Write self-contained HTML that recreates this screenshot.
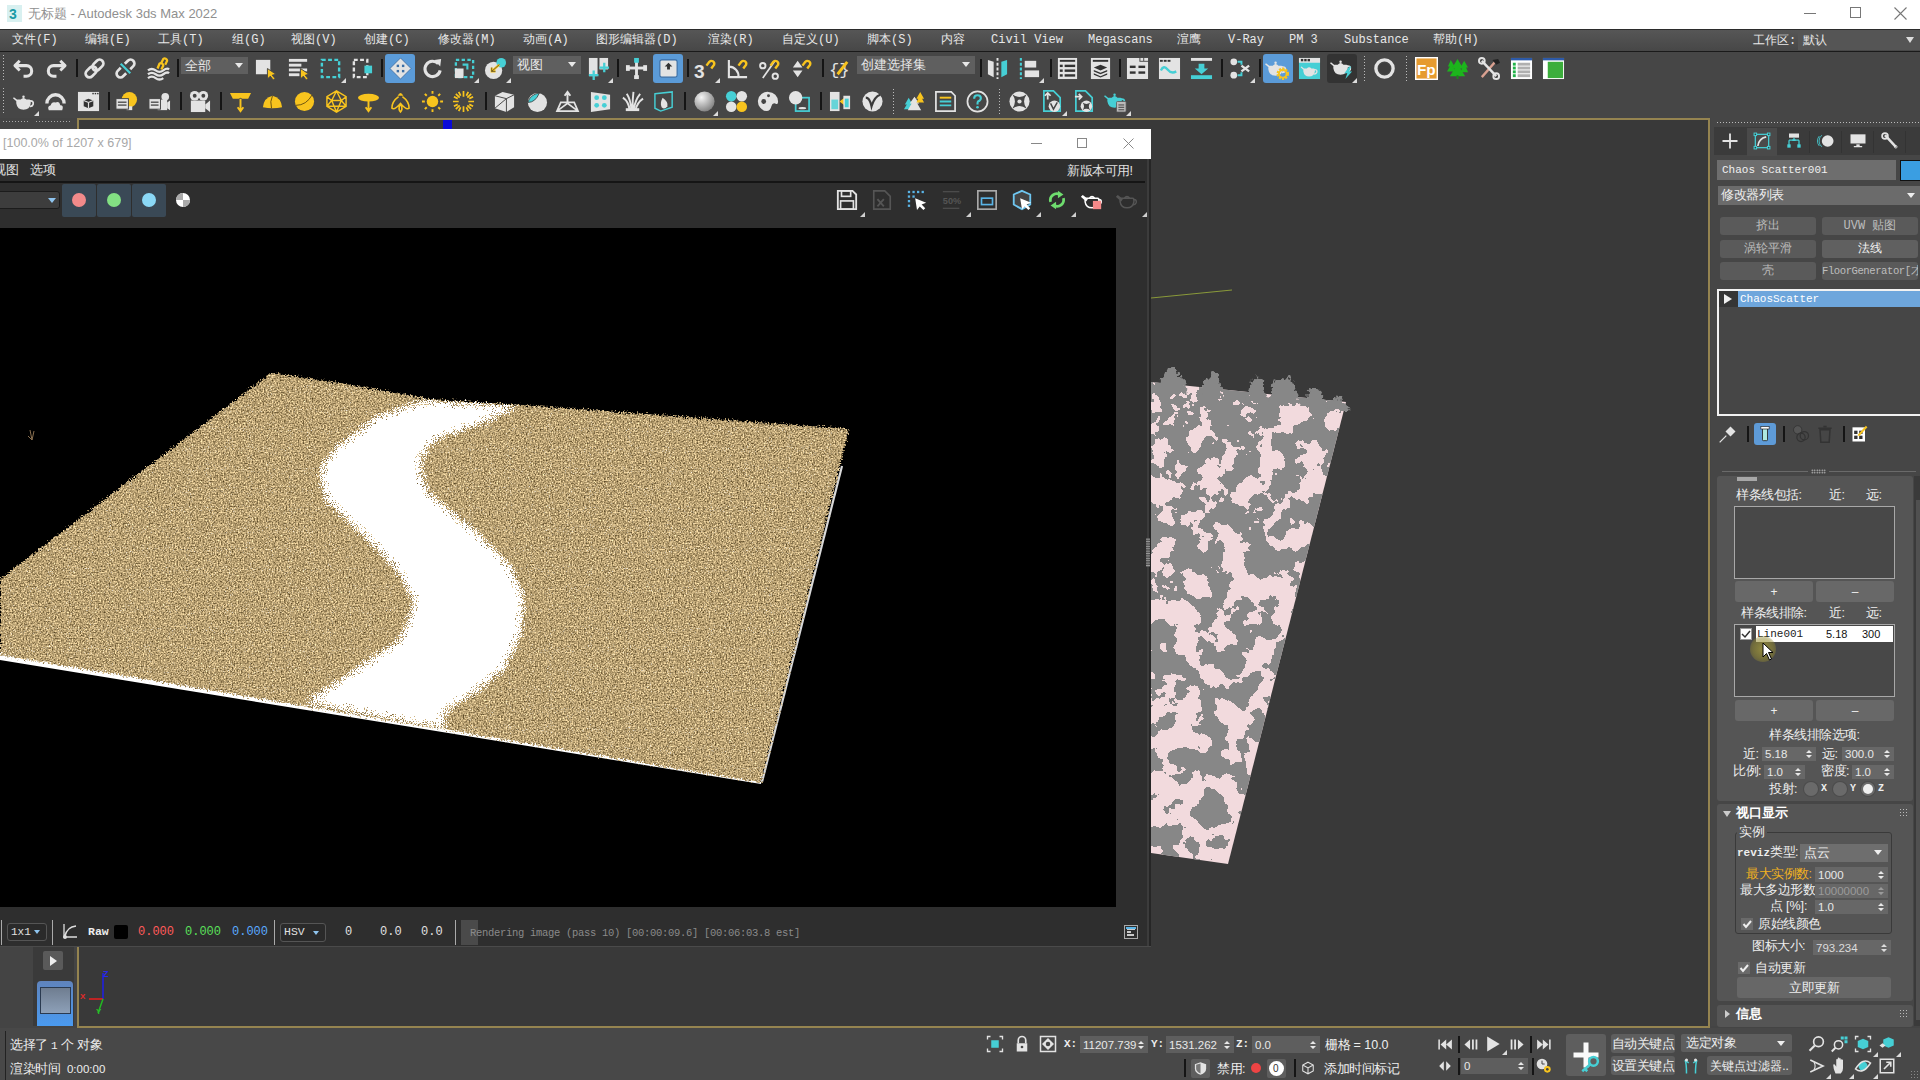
<!DOCTYPE html>
<html><head><meta charset="utf-8">
<style>
*{box-sizing:border-box;margin:0;padding:0}
html,body{width:1920px;height:1080px;overflow:hidden;background:#444444;font-family:"Liberation Sans",sans-serif;color:#e6e6e6}
.a{position:absolute}
.t{position:absolute;white-space:nowrap;font-size:12px;line-height:14px}
.m{font-family:"Liberation Mono",monospace}
.mn{top:31px;font-size:12px;line-height:18px;color:#e8e8e8;font-family:"Liberation Mono",monospace}
.ic{position:absolute;width:24px;height:24px;overflow:visible}
.sep{position:absolute;width:2px;height:18px;background:#151515}
.dd{position:absolute;background:#5e5e5e;height:17px}
.cor{position:absolute;width:0;height:0;border-left:5px solid transparent;border-bottom:5px solid #e0e0e0}
.c{display:inline-block;width:1em;font-style:normal;text-align:center;text-indent:0}
</style></head><body>
<!-- title bar -->
<div class="a" style="left:0;top:0;width:1920px;height:29px;background:#ffffff"></div>
<div class="a" style="left:0;top:29px;width:1920px;height:1px;background:#2b2b2b"></div>
<div class="a" style="left:0;top:30px;width:1920px;height:21px;background:linear-gradient(#565656,#474747)"></div>
<div class="a" style="left:0;top:51px;width:1920px;height:1px;background:#1a1a1a"></div>
<div class="a" style="left:0;top:52px;width:1920px;height:66px;background:#464646"></div>
<!-- viewport -->
<div class="a" style="left:77px;top:118px;width:1633px;height:910px;background:#393939;border:2px solid #958450"></div>
<!-- bottom status -->
<div class="a" style="left:0;top:1028px;width:1920px;height:52px;background:#484848"></div>
<div class="a" style="left:443px;top:120px;width:9px;height:9px;background:#0a0ad8"></div>
<!-- title -->
<svg class="ic" style="left:6px;top:4px;width:18px;height:20px" viewBox="0 0 18 20"><rect x="1" y="1" width="15" height="17" fill="#d8f0f0"/><text x="3" y="15" font-family="Liberation Sans" font-weight="bold" font-size="14" fill="#1a9aa6">3</text></svg>
<div class="t" style="left:28px;top:6px;font-size:13px;line-height:16px;color:#8f8f8f"><i class="c">无</i><i class="c">标</i><i class="c">题</i> - Autodesk 3ds Max 2022</div>
<div class="a" style="left:1804px;top:13px;width:12px;height:1px;background:#777"></div>
<div class="a" style="left:1850px;top:7px;width:11px;height:11px;border:1px solid #777"></div>
<svg class="ic" style="left:1894px;top:7px;width:13px;height:13px" viewBox="0 0 13 13"><path d="M0.5 0.5L12.5 12.5M12.5 0.5L0.5 12.5" stroke="#777" stroke-width="1.1"/></svg>
<div class="t mn" style="left:12px"><i class="c">文</i><i class="c">件</i>(F)</div>
<div class="t mn" style="left:85px"><i class="c">编</i><i class="c">辑</i>(E)</div>
<div class="t mn" style="left:158px"><i class="c">工</i><i class="c">具</i>(T)</div>
<div class="t mn" style="left:232px"><i class="c">组</i>(G)</div>
<div class="t mn" style="left:291px"><i class="c">视</i><i class="c">图</i>(V)</div>
<div class="t mn" style="left:364px"><i class="c">创</i><i class="c">建</i>(C)</div>
<div class="t mn" style="left:438px"><i class="c">修</i><i class="c">改</i><i class="c">器</i>(M)</div>
<div class="t mn" style="left:523px"><i class="c">动</i><i class="c">画</i>(A)</div>
<div class="t mn" style="left:596px"><i class="c">图</i><i class="c">形</i><i class="c">编</i><i class="c">辑</i><i class="c">器</i>(D)</div>
<div class="t mn" style="left:708px"><i class="c">渲</i><i class="c">染</i>(R)</div>
<div class="t mn" style="left:782px"><i class="c">自</i><i class="c">定</i><i class="c">义</i>(U)</div>
<div class="t mn" style="left:867px"><i class="c">脚</i><i class="c">本</i>(S)</div>
<div class="t mn" style="left:941px"><i class="c">内</i><i class="c">容</i></div>
<div class="t mn" style="left:991px">Civil View</div>
<div class="t mn" style="left:1088px">Megascans</div>
<div class="t mn" style="left:1177px"><i class="c">渲</i><i class="c">鹰</i></div>
<div class="t mn" style="left:1228px">V-Ray</div>
<div class="t mn" style="left:1289px">PM 3</div>
<div class="t mn" style="left:1344px">Substance</div>
<div class="t mn" style="left:1433px"><i class="c">帮</i><i class="c">助</i>(H)</div>
<div class="t mn" style="left:1753px;top:32px"><i class="c">工</i><i class="c">作</i><i class="c">区</i>:</div>
<div class="a" style="left:1798px;top:30px;width:122px;height:20px;background:#555555"></div>
<div class="t mn" style="left:1803px;top:32px"><i class="c">默</i><i class="c">认</i></div>
<div class="a" style="left:1906px;top:37px;width:0;height:0;border-left:4px solid transparent;border-right:4px solid transparent;border-top:6px solid #ddd"></div>
<!-- toolbar -->
<div class="a" style="left:2px;top:54.0px;width:3px;height:28px;background-image:radial-gradient(#bbb 0.8px,transparent 1px);background-size:3px 3px"></div>
<div class="a" style="left:2px;top:87.0px;width:3px;height:28px;background-image:radial-gradient(#bbb 0.8px,transparent 1px);background-size:3px 3px"></div>
<div class="a" style="left:385px;top:54px;width:30px;height:29px;background:#5b9bd8;border-radius:3px"></div>
<div class="a" style="left:653px;top:54px;width:30px;height:29px;background:#5b9bd8;border-radius:3px"></div>
<div class="a" style="left:1263px;top:54px;width:30px;height:29px;background:#5b9bd8;border-radius:3px"></div>
<div class="a" style="left:1327px;top:54px;width:30px;height:29px;background:#333333;border-radius:3px"></div>
<svg class="ic" style="left:12.5px;top:56.5px;width:23px;height:23px" viewBox="0 0 24 24"><path d="M7 4L2 9L7 14" fill="none" stroke="#e3e3e3" stroke-width="3" stroke-linejoin="round"/><path d="M3 9H14A5.5 5.5 0 0 1 14 20H11" fill="none" stroke="#e3e3e3" stroke-width="3.2"/></svg>
<svg class="ic" style="left:43.5px;top:56.5px;width:23px;height:23px" viewBox="0 0 24 24"><path d="M17 4L22 9L17 14" fill="none" stroke="#e3e3e3" stroke-width="3" stroke-linejoin="round"/><path d="M21 9H10A5.5 5.5 0 0 0 10 20H13" fill="none" stroke="#e3e3e3" stroke-width="3.2"/></svg>
<svg class="ic" style="left:82.5px;top:56.5px;width:23px;height:23px" viewBox="0 0 24 24"><g transform="rotate(-45 12 12)" fill="none" stroke="#e3e3e3" stroke-width="2.8"><rect x="0.5" y="8" width="13" height="8" rx="4"/><rect x="10.5" y="8" width="13" height="8" rx="4"/></g></svg>
<svg class="ic" style="left:113.5px;top:56.5px;width:23px;height:23px" viewBox="0 0 24 24"><g transform="rotate(-45 12 12)" fill="none" stroke="#e3e3e3" stroke-width="2.8"><path d="M9 8H4.5A4 4 0 0 0 4.5 16H9"/><path d="M15 8H19.5A4 4 0 0 1 19.5 16H15"/></g><path d="M7 7L17 17" stroke="#46cfd5" stroke-width="2.2"/></svg>
<svg class="ic" style="left:146.5px;top:56.5px;width:23px;height:23px" viewBox="0 0 24 24"><g fill="none" stroke="#e3e3e3" stroke-width="2.4"><path d="M1 14Q5 11 9 14T17 14T23 13"/><path d="M1 18Q5 15 9 18T17 18T23 17"/><path d="M1 22Q5 19 9 22T17 22"/></g><g fill="none" stroke="#f8c41e" stroke-width="2.4"><path d="M11 12L13 7A2.5 2.5 0 0 1 17 9L15 13"/><path d="M15 6L17 2A2.5 2.5 0 0 1 21 4L19 8"/></g></svg>
<svg class="ic" style="left:253.5px;top:56.5px;width:23px;height:23px" viewBox="0 0 24 24"><rect x="2" y="3" width="15" height="15" fill="#e3e3e3"/><path d="M14 12L14 23L17 20L20 24L22 22.5L19 19L23 18Z" fill="#f8c41e" stroke="#464646" stroke-width="1"/></svg>
<svg class="ic" style="left:286.5px;top:56.5px;width:23px;height:23px" viewBox="0 0 24 24"><g fill="#e3e3e3"><rect x="2" y="2" width="19" height="3"/><rect x="2" y="7" width="13" height="3"/><rect x="2" y="12" width="19" height="3"/><rect x="2" y="17" width="11" height="3"/></g><path d="M14 12L14 23L17 20L20 24L22 22.5L19 19L23 18Z" fill="#f8c41e" stroke="#464646" stroke-width="1"/></svg>
<svg class="ic" style="left:318.5px;top:56.5px;width:23px;height:23px" viewBox="0 0 24 24"><rect x="3" y="3" width="18" height="18" fill="none" stroke="#46cfd5" stroke-width="2.5" stroke-dasharray="4 2.5"/></svg>
<svg class="ic" style="left:350.5px;top:56.5px;width:23px;height:23px" viewBox="0 0 24 24"><rect x="3" y="3" width="14" height="18" fill="none" stroke="#e3e3e3" stroke-width="2.5" stroke-dasharray="4 2.5"/><rect x="14" y="9" width="8" height="8" fill="#46cfd5"/></svg>
<svg class="ic" style="left:388.5px;top:56.5px;width:23px;height:23px" viewBox="0 0 24 24"><path d="M12 1L23 12L12 23L1 12Z" fill="#e3e3e3" stroke="#3d6a9e" stroke-width="0.8"/><g fill="#3b6ea5"><rect x="8" y="8" width="2.5" height="2.5"/><rect x="13.5" y="8" width="2.5" height="2.5"/><rect x="8" y="13.5" width="2.5" height="2.5"/><rect x="13.5" y="13.5" width="2.5" height="2.5"/></g></svg>
<svg class="ic" style="left:420.5px;top:56.5px;width:23px;height:23px" viewBox="0 0 24 24"><path d="M18 7A8 8 0 1 0 20 14" fill="none" stroke="#e3e3e3" stroke-width="3.2"/><path d="M14 3L21 2L20 10Z" fill="#e3e3e3"/></svg>
<svg class="ic" style="left:452.5px;top:56.5px;width:23px;height:23px" viewBox="0 0 24 24"><rect x="3" y="3" width="18" height="18" fill="none" stroke="#46cfd5" stroke-width="2.4" stroke-dasharray="3.5 2.5"/><rect x="2" y="12" width="9" height="10" fill="#e3e3e3"/><path d="M10 8H15V13" fill="none" stroke="#46cfd5" stroke-width="2.2"/></svg>
<svg class="ic" style="left:483.5px;top:56.5px;width:23px;height:23px" viewBox="0 0 24 24"><circle cx="10" cy="14" r="9" fill="#e3e3e3"/><circle cx="18" cy="6" r="5" fill="#46cfd5"/><path d="M16 8L8 15M8 11V15H12" fill="none" stroke="#f8c41e" stroke-width="2.2"/><path d="M16 8L8 15M8 11V15H12" fill="none" stroke="#222" stroke-width="0.6"/></svg>
<svg class="ic" style="left:586.5px;top:56.5px;width:23px;height:23px" viewBox="0 0 24 24"><rect x="2" y="1" width="9" height="19" fill="#e3e3e3"/><rect x="13" y="1" width="9" height="12" fill="#e3e3e3"/><g stroke="#46cfd5" stroke-width="2.4"><path d="M7 14V24M2 19H12"/><path d="M18 6V16M13 11H23"/></g></svg>
<svg class="ic" style="left:624.5px;top:56.5px;width:23px;height:23px" viewBox="0 0 24 24"><g fill="#e3e3e3"><rect x="10.5" y="5" width="3" height="18"/><rect x="2" y="10" width="20" height="3"/><rect x="1" y="8.5" width="4" height="6"/><rect x="19" y="8.5" width="4" height="6"/><rect x="9.5" y="19" width="5" height="4"/></g><rect x="9.5" y="1" width="5" height="5" fill="#46cfd5"/></svg>
<svg class="ic" style="left:656.5px;top:56.5px;width:23px;height:23px" viewBox="0 0 24 24"><rect x="3" y="3" width="18" height="18" rx="2" fill="#e3e3e3" stroke="#3b6ea5" stroke-width="1.2"/><path d="M12 6L16 10H13.5V13H10.5V10H8Z" fill="#333"/></svg>
<svg class="ic" style="left:693.5px;top:56.5px;width:23px;height:23px" viewBox="0 0 24 24"><text x="0" y="22" font-family="Liberation Sans" font-weight="bold" font-size="20" fill="#e3e3e3">3</text><path d="M13 9L16 5A3 3 0 0 1 21 8L18 12" fill="none" stroke="#f8c41e" stroke-width="2.5"/></svg>
<svg class="ic" style="left:725.5px;top:56.5px;width:23px;height:23px" viewBox="0 0 24 24"><path d="M3 3V21H22M3 10A10 10 0 0 1 13 21" fill="none" stroke="#e3e3e3" stroke-width="2.2"/><path d="M13 9L16 5A3 3 0 0 1 21 8L18 12" fill="none" stroke="#f8c41e" stroke-width="2.5"/></svg>
<svg class="ic" style="left:757.5px;top:56.5px;width:23px;height:23px" viewBox="0 0 24 24"><circle cx="5" cy="9" r="2.8" fill="none" stroke="#e3e3e3" stroke-width="2"/><circle cx="18" cy="20" r="2.8" fill="none" stroke="#e3e3e3" stroke-width="2"/><path d="M5 22L17 5" stroke="#e3e3e3" stroke-width="1.8"/><path d="M13 9L16 5A3 3 0 0 1 21 8L18 12" fill="none" stroke="#f8c41e" stroke-width="2.5"/></svg>
<svg class="ic" style="left:789.5px;top:56.5px;width:23px;height:23px" viewBox="0 0 24 24"><path d="M3 11L8 4L13 11Z M3 14L8 21L13 14Z" fill="#e3e3e3"/><path d="M13 9L16 5A3 3 0 0 1 21 8L18 12" fill="none" stroke="#f8c41e" stroke-width="2.5"/></svg>
<svg class="ic" style="left:828.5px;top:56.5px;width:23px;height:23px" viewBox="0 0 24 24"><text x="0" y="19" font-family="Liberation Mono" font-size="18" fill="#e3e3e3">{}</text><path d="M9 18L19 5" stroke="#f8c41e" stroke-width="3"/></svg>
<svg class="ic" style="left:985.5px;top:56.5px;width:23px;height:23px" viewBox="0 0 24 24"><path d="M2 3L8 5V21L2 18Z" fill="#e3e3e3"/><path d="M22 3L16 5V21L22 18Z" fill="#46cfd5"/><path d="M12 1V23" stroke="#e3e3e3" stroke-width="2" stroke-dasharray="3 2"/></svg>
<svg class="ic" style="left:1017.5px;top:56.5px;width:23px;height:23px" viewBox="0 0 24 24"><path d="M3 1V23" stroke="#46cfd5" stroke-width="2.2" stroke-dasharray="3 2"/><rect x="7" y="4" width="12" height="7" fill="#e3e3e3"/><rect x="7" y="14" width="15" height="7" fill="#e3e3e3"/></svg>
<svg class="ic" style="left:1055.5px;top:56.5px;width:23px;height:23px" viewBox="0 0 24 24"><rect x="2" y="1" width="20" height="22" fill="#e3e3e3"/><g fill="#333"><rect x="4" y="3" width="16" height="2"/><rect x="4" y="8" width="3" height="2.5"/><rect x="9" y="8" width="11" height="2.5"/><rect x="4" y="13" width="3" height="2.5"/><rect x="9" y="13" width="11" height="2.5"/><rect x="4" y="18" width="3" height="2.5"/><rect x="9" y="18" width="11" height="2.5"/></g></svg>
<svg class="ic" style="left:1088.5px;top:56.5px;width:23px;height:23px" viewBox="0 0 24 24"><rect x="2" y="1" width="20" height="22" fill="#e3e3e3"/><rect x="4" y="3" width="16" height="2" fill="#333"/><path d="M12 8L19 11L12 14L5 11Z M5 13.5L12 16.5L19 13.5V15L12 18L5 15Z M5 17L12 20L19 17V18.5L12 21.5L5 18.5Z" fill="#333"/></svg>
<svg class="ic" style="left:1125.5px;top:56.5px;width:23px;height:23px" viewBox="0 0 24 24"><path d="M1 1H14V5H23V23H1Z" fill="#e3e3e3"/><rect x="15" y="1" width="3" height="3" fill="#e3e3e3"/><rect x="19" y="1" width="4" height="3" fill="#e3e3e3"/><g fill="#333"><rect x="4" y="9" width="6" height="2.5"/><rect x="13" y="9" width="7" height="2.5"/><rect x="4" y="15" width="6" height="2.5"/><rect x="13" y="15" width="7" height="2.5"/></g></svg>
<svg class="ic" style="left:1157.5px;top:56.5px;width:23px;height:23px" viewBox="0 0 24 24"><rect x="1" y="1" width="22" height="22" fill="#e3e3e3"/><g fill="#333"><rect x="2" y="3" width="3" height="2"/><rect x="6" y="3" width="3" height="2"/><rect x="10" y="3" width="3" height="2"/></g><path d="M3 14Q6 8 10 13T19 15" fill="none" stroke="#46cfd5" stroke-width="2.5"/></svg>
<svg class="ic" style="left:1189.5px;top:56.5px;width:23px;height:23px" viewBox="0 0 24 24"><rect x="1" y="1" width="22" height="3" fill="#e3e3e3"/><rect x="1" y="19" width="22" height="4" fill="#46cfd5"/><path d="M9 7H15V12H19L12 18L5 12H9Z" fill="#46cfd5"/></svg>
<svg class="ic" style="left:1228.5px;top:56.5px;width:23px;height:23px" viewBox="0 0 24 24"><g fill="#e3e3e3"><circle cx="5" cy="5" r="3.5"/><circle cx="5" cy="19" r="3.5"/></g><g stroke="#46cfd5" stroke-width="2" fill="none"><path d="M9 5H13V8M9 19H13V16"/></g><path d="M13 9L21 15M13 15L21 9" stroke="#e3e3e3" stroke-width="2.5"/></svg>
<svg class="ic" style="left:1265.5px;top:56.5px;width:23px;height:23px" viewBox="0 0 24 24"><g transform="translate(-2 -1)"><path d="M6 10H18Q20 10 19.5 14Q18.5 20.5 12 20.5Q5.5 20.5 4.5 14Q4 10 6 10Z M5.5 12.5L1 8.5L2 7.5L6.5 11Z M9 10Q12 6.5 15 10Z" fill="#e3e3e3"/><circle cx="12" cy="7" r="1.3" fill="#e3e3e3"/><path d="M18.5 11.5Q23 11 22 15Q21 17.5 18.5 17" fill="none" stroke="#e3e3e3" stroke-width="1.8"/></g><circle cx="17.5" cy="17.5" r="5" fill="none" stroke="#f8c41e" stroke-width="3" stroke-dasharray="2 1.2"/><circle cx="17.5" cy="17.5" r="4" fill="none" stroke="#f8c41e" stroke-width="2"/></svg>
<svg class="ic" style="left:1297.5px;top:56.5px;width:23px;height:23px" viewBox="0 0 24 24"><rect x="1" y="1" width="22" height="22" fill="#46cfd5"/><rect x="1" y="1" width="22" height="5" fill="#e3e3e3"/><g fill="#333"><rect x="3" y="2" width="2.5" height="2.5"/><rect x="6.5" y="2" width="2.5" height="2.5"/><rect x="10" y="2" width="2.5" height="2.5"/></g><g transform="translate(2 4) scale(0.8)"><path d="M6 10H18Q20 10 19.5 14Q18.5 20.5 12 20.5Q5.5 20.5 4.5 14Q4 10 6 10Z M5.5 12.5L1 8.5L2 7.5L6.5 11Z M9 10Q12 6.5 15 10Z" fill="#e3e3e3"/><path d="M18.5 11.5Q23 11 22 15Q21 17.5 18.5 17" fill="none" stroke="#e3e3e3" stroke-width="1.8"/></g></svg>
<svg class="ic" style="left:1330.5px;top:56.5px;width:23px;height:23px" viewBox="0 0 24 24"><g transform="translate(-2 -2)"><path d="M6 10H18Q20 10 19.5 14Q18.5 20.5 12 20.5Q5.5 20.5 4.5 14Q4 10 6 10Z M5.5 12.5L1 8.5L2 7.5L6.5 11Z M9 10Q12 6.5 15 10Z" fill="#e3e3e3"/><circle cx="12" cy="7" r="1.3" fill="#e3e3e3"/><path d="M18.5 11.5Q23 11 22 15Q21 17.5 18.5 17" fill="none" stroke="#e3e3e3" stroke-width="1.8"/></g><path d="M19 10L14 17H17L15 23L22 15H19L21 10Z" fill="#46cfd5"/></svg>
<svg class="ic" style="left:1372.5px;top:56.5px;width:23px;height:23px" viewBox="0 0 24 24"><circle cx="12" cy="12" r="9" fill="none" stroke="#e3e3e3" stroke-width="3.5"/><circle cx="12" cy="12" r="6" fill="#3e3e3e"/></svg>
<svg class="ic" style="left:1414.5px;top:56.5px;width:23px;height:23px" viewBox="0 0 24 24"><rect x="0" y="0" width="24" height="24" fill="#fff"/><rect x="1.5" y="1.5" width="21" height="21" fill="#e69b2f"/><text x="2" y="19" font-family="Liberation Sans" font-weight="bold" font-size="16" fill="#fff">Fp</text></svg>
<svg class="ic" style="left:1445.5px;top:56.5px;width:23px;height:23px" viewBox="0 0 24 24"><path d="M12 2L18 12H15L20 20H4L9 12H6Z" fill="#1cb51c"/><path d="M5 3L9 10H7L10 15H1L4 10H2Z" fill="#1cb51c"/><path d="M19 4L23 11H21L23 16H15L17 11H15Z" fill="#1cb51c"/><rect x="11" y="19" width="2" height="4" fill="#1a8a1a"/></svg>
<svg class="ic" style="left:1477.5px;top:56.5px;width:23px;height:23px" viewBox="0 0 24 24"><path d="M4 21L18 5" stroke="#d9a090" stroke-width="2.5"/><path d="M15 3L21 2L23 6L19 8Z" fill="#222"/><path d="M4 4L19 20" stroke="#e3e3e3" stroke-width="2.5"/><circle cx="4" cy="4" r="3" fill="none" stroke="#e3e3e3" stroke-width="2"/><circle cx="19" cy="20" r="3" fill="none" stroke="#e3e3e3" stroke-width="2"/></svg>
<svg class="ic" style="left:1509.5px;top:56.5px;width:23px;height:23px" viewBox="0 0 24 24"><rect x="1" y="1" width="22" height="22" fill="#fff"/><rect x="1" y="1" width="22" height="2.5" fill="#2d5aa8"/><g fill="#22b34a"><rect x="3" y="6" width="3" height="3"/><rect x="3" y="10" width="3" height="3"/><rect x="3" y="14" width="3" height="3"/><rect x="3" y="18" width="3" height="3"/></g><g fill="#b0b0b0"><rect x="8" y="6" width="13" height="3"/><rect x="8" y="10" width="13" height="3"/><rect x="8" y="14" width="13" height="3"/><rect x="8" y="18" width="13" height="3"/></g></svg>
<svg class="ic" style="left:1541.5px;top:56.5px;width:23px;height:23px" viewBox="0 0 24 24"><rect x="1" y="1" width="22" height="22" fill="#fff"/><rect x="1" y="1" width="22" height="2.5" fill="#2d5aa8"/><rect x="6" y="5" width="16" height="17" fill="#3cae3c"/></svg>
<div class="sep" style="left:76px;top:59.0px;height:18px;width:2px;background:#151515"></div>
<div class="sep" style="left:177px;top:59.0px;height:18px;width:2px;background:#151515"></div>
<div class="sep" style="left:381px;top:59.0px;height:18px;width:2px;background:#151515"></div>
<div class="sep" style="left:617px;top:59.0px;height:18px;width:2px;background:#151515"></div>
<div class="sep" style="left:687px;top:59.0px;height:18px;width:2px;background:#151515"></div>
<div class="sep" style="left:822px;top:59.0px;height:18px;width:2px;background:#151515"></div>
<div class="sep" style="left:980px;top:59.0px;height:18px;width:2px;background:#151515"></div>
<div class="sep" style="left:1050px;top:59.0px;height:18px;width:2px;background:#151515"></div>
<div class="sep" style="left:1119px;top:59.0px;height:18px;width:2px;background:#151515"></div>
<div class="sep" style="left:1221px;top:59.0px;height:18px;width:2px;background:#151515"></div>
<div class="sep" style="left:1259px;top:59.0px;height:18px;width:2px;background:#151515"></div>
<div class="a" style="left:1363px;top:55.0px;width:3px;height:26px;background-image:radial-gradient(#bbb 0.8px,transparent 1px);background-size:3px 3px"></div>
<div class="a" style="left:1405px;top:55.0px;width:3px;height:26px;background-image:radial-gradient(#bbb 0.8px,transparent 1px);background-size:3px 3px"></div>
<div class="cor" style="left:341px;top:78px;border-bottom-color:#dcdcdc"></div>
<div class="cor" style="left:474px;top:78px;border-bottom-color:#dcdcdc"></div>
<div class="cor" style="left:506px;top:78px;border-bottom-color:#dcdcdc"></div>
<div class="cor" style="left:608px;top:78px;border-bottom-color:#dcdcdc"></div>
<div class="cor" style="left:715px;top:78px;border-bottom-color:#dcdcdc"></div>
<div class="cor" style="left:1039px;top:78px;border-bottom-color:#dcdcdc"></div>
<div class="cor" style="left:1250px;top:78px;border-bottom-color:#dcdcdc"></div>
<div class="cor" style="left:1352px;top:78px;border-bottom-color:#dcdcdc"></div>
<div class="dd" style="left:181px;top:57px;width:67px;height:17px;background:#5f5f5f"></div>
<div class="t" style="left:185px;top:58px;font-size:13px;line-height:16px;color:#e8e8e8"><i class="c">全</i><i class="c">部</i></div>
<div class="a" style="left:235px;top:63px;width:0;height:0;border-left:4px solid transparent;border-right:4px solid transparent;border-top:5px solid #e8e8e8"></div>
<div class="dd" style="left:513px;top:56px;width:68px;height:18px;background:#5f5f5f"></div>
<div class="t" style="left:517px;top:57px;font-size:13px;line-height:16px;color:#e8e8e8"><i class="c">视</i><i class="c">图</i></div>
<div class="a" style="left:568px;top:62px;width:0;height:0;border-left:4px solid transparent;border-right:4px solid transparent;border-top:5px solid #e8e8e8"></div>
<div class="dd" style="left:857px;top:56px;width:118px;height:18px;background:#5f5f5f"></div>
<div class="t" style="left:861px;top:57px;font-size:13px;line-height:16px;color:#e8e8e8"><i class="c">创</i><i class="c">建</i><i class="c">选</i><i class="c">择</i><i class="c">集</i></div>
<div class="a" style="left:962px;top:62px;width:0;height:0;border-left:4px solid transparent;border-right:4px solid transparent;border-top:5px solid #e8e8e8"></div>
<svg class="ic" style="left:11.5px;top:89.5px;width:23px;height:23px" viewBox="0 0 24 24"><path d="M6 10H18Q20 10 19.5 14Q18.5 20.5 12 20.5Q5.5 20.5 4.5 14Q4 10 6 10Z M5.5 12.5L1 8.5L2 7.5L6.5 11Z M9 10Q12 6.5 15 10Z" fill="#e3e3e3"/><circle cx="12" cy="7" r="1.3" fill="#e3e3e3"/><path d="M18.5 11.5Q23 11 22 15Q21 17.5 18.5 17" fill="none" stroke="#e3e3e3" stroke-width="1.8"/></svg>
<svg class="ic" style="left:43.5px;top:89.5px;width:23px;height:23px" viewBox="0 0 24 24"><path d="M3 14A9 9 0 0 1 21 14" fill="none" stroke="#e3e3e3" stroke-width="3.5"/><path d="M5 21Q3 17 7 16Q8 12 12 13Q16 11 17 16Q21 16 19 21Z" fill="#e3e3e3"/></svg>
<svg class="ic" style="left:76.5px;top:89.5px;width:23px;height:23px" viewBox="0 0 24 24"><rect x="1" y="2" width="22" height="20" fill="#e3e3e3"/><g fill="#333"><rect x="16" y="3" width="1.5" height="1.5"/><rect x="18.5" y="3" width="1.5" height="1.5"/><rect x="21" y="3" width="1.5" height="1.5"/></g><rect x="3" y="6" width="18" height="14" fill="#e3e3e3"/><path d="M7 11L12 9L17 11V17L12 19L7 17Z" fill="#333"/><path d="M12 13V19M7 11L12 13L17 11" stroke="#e3e3e3" stroke-width="1.2" fill="none"/></svg>
<svg class="ic" style="left:114.5px;top:89.5px;width:23px;height:23px" viewBox="0 0 24 24"><circle cx="15" cy="10" r="8" fill="#f8c41e"/><rect x="12" y="17" width="6" height="4" fill="#e3e3e3"/><rect x="1" y="9" width="13" height="11" fill="#e3e3e3" stroke="#444" stroke-width="1"/><g fill="#555"><rect x="3" y="12" width="9" height="1.5"/><rect x="3" y="15" width="9" height="1.5"/></g></svg>
<svg class="ic" style="left:147.5px;top:89.5px;width:23px;height:23px" viewBox="0 0 24 24"><circle cx="18" cy="7" r="4" fill="#e3e3e3"/><rect x="10" y="10" width="10" height="11" fill="#e3e3e3"/><path d="M20 13L23 11V21L20 19Z" fill="#e3e3e3"/><rect x="1" y="9" width="12" height="11" fill="#e3e3e3" stroke="#444" stroke-width="1"/><g fill="#555"><rect x="3" y="12" width="8" height="1.5"/><rect x="3" y="15" width="8" height="1.5"/></g></svg>
<svg class="ic" style="left:187.5px;top:89.5px;width:23px;height:23px" viewBox="0 0 24 24"><circle cx="7" cy="6" r="5" fill="#e3e3e3"/><circle cx="16" cy="6" r="5" fill="#e3e3e3"/><circle cx="7" cy="6" r="2" fill="#444"/><circle cx="16" cy="6" r="2" fill="#444"/><rect x="3" y="11" width="15" height="12" fill="#e3e3e3"/><path d="M18 15L23 11V23L18 19Z" fill="#e3e3e3"/></svg>
<svg class="ic" style="left:228.5px;top:89.5px;width:23px;height:23px" viewBox="0 0 24 24"><path d="M1 3H23L20 9H14L12 8L10 9H4Z" fill="#f8c41e"/><path d="M12 9V21M9 18L12 22L15 18" stroke="#f8c41e" stroke-width="2" fill="none"/></svg>
<svg class="ic" style="left:260.5px;top:89.5px;width:23px;height:23px" viewBox="0 0 24 24"><path d="M2 18Q3 8 12 6Q21 8 22 18Q12 20 2 18Z" fill="#f8c41e"/><path d="M12 6Q9 12 11 19" stroke="#6a5210" stroke-width="1" fill="none"/></svg>
<svg class="ic" style="left:292.5px;top:89.5px;width:23px;height:23px" viewBox="0 0 24 24"><circle cx="12" cy="12" r="10" fill="#f8c41e"/><path d="M3 16Q14 16 20 5" stroke="#6a5210" stroke-width="1" fill="none"/></svg>
<svg class="ic" style="left:324.5px;top:89.5px;width:23px;height:23px" viewBox="0 0 24 24"><path d="M12 1L22 7V17L12 23L2 17V7Z M12 1L7 11L12 23M12 1L17 11L12 23M2 7L7 11H17L22 7M2 17L7 11M22 17L17 11M2 17H22" fill="none" stroke="#f8c41e" stroke-width="1.5"/></svg>
<svg class="ic" style="left:356.5px;top:89.5px;width:23px;height:23px" viewBox="0 0 24 24"><ellipse cx="12" cy="8" rx="11" ry="4" fill="#f8c41e"/><path d="M12 11V21M9 18L12 22L15 18" stroke="#f8c41e" stroke-width="2" fill="none"/></svg>
<svg class="ic" style="left:388.5px;top:89.5px;width:23px;height:23px" viewBox="0 0 24 24"><path d="M9 6Q12 0 15 6Z" fill="#f8c41e"/><path d="M10 7Q3 12 3 19Q6 21 12 14Q18 21 21 19Q21 12 14 7M12 14Q9 20 12 23Q15 20 12 14" fill="none" stroke="#f8c41e" stroke-width="1.6"/></svg>
<svg class="ic" style="left:420.5px;top:89.5px;width:23px;height:23px" viewBox="0 0 24 24"><circle cx="12" cy="12" r="6" fill="#f8c41e"/><g stroke="#f8c41e" stroke-width="2"><path d="M12 1V4M12 20V23M1 12H4M20 12H23M4 4L6 6M18 18L20 20M4 20L6 18M18 6L20 4"/></g></svg>
<svg class="ic" style="left:451.5px;top:89.5px;width:23px;height:23px" viewBox="0 0 24 24"><g stroke="#f8c41e" stroke-width="1.8"><path d="M12 1V7M12 17V23M1 12H7M17 12H23M4 4L8 8M16 16L20 20M4 20L8 16M16 8L20 4M7 2L9 6M17 2L15 6M2 7L6 9M22 7L18 9M2 17L6 15M22 17L18 15M7 22L9 18M17 22L15 18"/></g></svg>
<svg class="ic" style="left:492.5px;top:89.5px;width:23px;height:23px" viewBox="0 0 24 24"><path d="M2 6L10 2L22 5V18L14 23L2 19Z" fill="#e3e3e3"/><path d="M2 6L14 9L22 5M14 9V23M14 9L2 19" stroke="#444" stroke-width="1" fill="none"/></svg>
<svg class="ic" style="left:524.5px;top:89.5px;width:23px;height:23px" viewBox="0 0 24 24"><circle cx="13" cy="13" r="10" fill="#e3e3e3"/><path d="M3 13Q5 5 15 3Q11 13 3 13Z" fill="#46cfd5" stroke="#333" stroke-width="0.8"/></svg>
<svg class="ic" style="left:555.5px;top:89.5px;width:23px;height:23px" viewBox="0 0 24 24"><path d="M12 3V14M9 6L12 2L15 6" stroke="#e3e3e3" stroke-width="2" fill="none"/><path d="M5 13L19 13L23 22H1Z M1 22L12 14L23 22" fill="none" stroke="#e3e3e3" stroke-width="1.8"/></svg>
<svg class="ic" style="left:588.5px;top:89.5px;width:23px;height:23px" viewBox="0 0 24 24"><path d="M2 2L22 5V20L2 23Z" fill="#e3e3e3"/><g fill="#46cfd5"><circle cx="8" cy="8" r="2.5"/><circle cx="16" cy="8" r="2.5"/><circle cx="8" cy="16" r="2.5"/><circle cx="16" cy="16" r="2.5"/></g></svg>
<svg class="ic" style="left:620.5px;top:89.5px;width:23px;height:23px" viewBox="0 0 24 24"><path d="M2 8Q8 12 9 21M6 4Q10 10 11 21M13 2Q12 10 12 21M20 4Q15 10 13 21M23 9Q17 13 15 21" stroke="#e3e3e3" stroke-width="2" fill="none"/><rect x="5" y="19" width="14" height="3" fill="#e3e3e3"/></svg>
<svg class="ic" style="left:652.5px;top:89.5px;width:23px;height:23px" viewBox="0 0 24 24"><path d="M2 4L20 2V18L8 22L2 19Z" fill="none" stroke="#46cfd5" stroke-width="1.5"/><path d="M10 8Q16 12 15 17Q12 21 9 18Q7 14 10 8Z" fill="#e3e3e3"/></svg>
<svg class="ic" style="left:692.5px;top:89.5px;width:23px;height:23px" viewBox="0 0 24 24"><defs><radialGradient id="sg" cx="0.35" cy="0.3" r="0.8"><stop offset="0" stop-color="#f5f5f5"/><stop offset="1" stop-color="#777"/></radialGradient></defs><circle cx="12" cy="12" r="10.5" fill="url(#sg)"/></svg>
<svg class="ic" style="left:724.5px;top:89.5px;width:23px;height:23px" viewBox="0 0 24 24"><circle cx="6.5" cy="6.5" r="5.5" fill="#46cfd5"/><circle cx="17.5" cy="6.5" r="5.5" fill="#e3e3e3"/><circle cx="6.5" cy="17.5" r="5.5" fill="#e3e3e3"/><circle cx="17.5" cy="17.5" r="5.5" fill="#f8c41e"/></svg>
<svg class="ic" style="left:756.5px;top:89.5px;width:23px;height:23px" viewBox="0 0 24 24"><path d="M12 2A10 10 0 0 1 22 12Q22 16 19 14Q16 13 15 17Q14 22 10 22A10 10 0 0 1 12 2Z" fill="#e3e3e3"/><circle cx="7" cy="12" r="2.5" fill="#444"/><circle cx="12" cy="6" r="1.5" fill="#444"/></svg>
<svg class="ic" style="left:787.5px;top:89.5px;width:23px;height:23px" viewBox="0 0 24 24"><rect x="8" y="8" width="14" height="14" fill="none" stroke="#46cfd5" stroke-width="1.8"/><circle cx="8" cy="8" r="7" fill="#e3e3e3"/><ellipse cx="15" cy="19" rx="4" ry="1.2" fill="#e3e3e3"/></svg>
<svg class="ic" style="left:828.5px;top:89.5px;width:23px;height:23px" viewBox="0 0 24 24"><rect x="1" y="2" width="10" height="20" fill="#e3e3e3"/><g fill="#46cfd5" opacity="0.8"><rect x="2.5" y="10" width="7" height="10"/></g><path d="M11 12L16 8V16Z" fill="#f8c41e"/><rect x="15" y="6" width="7" height="14" fill="#e3e3e3"/><rect x="16.5" y="9" width="4" height="9" fill="#46cfd5"/></svg>
<svg class="ic" style="left:860.5px;top:89.5px;width:23px;height:23px" viewBox="0 0 24 24"><circle cx="12" cy="12" r="10.5" fill="#e3e3e3"/><path d="M5 8Q9 8 11 17Q14 7 20 5" stroke="#3a3a3a" stroke-width="2.3" fill="none"/></svg>
<svg class="ic" style="left:901.5px;top:89.5px;width:23px;height:23px" viewBox="0 0 24 24"><path d="M7 8L11 15H9L12 20H2L5 15H3Z" fill="#46cfd5"/><path d="M13 7L18 14H16L20 21H6L10 14H8Z" fill="#e3e3e3"/><path d="M19 2L23 9H21L23 13H15L17 9H15Z" fill="#f8c41e"/></svg>
<svg class="ic" style="left:933.5px;top:89.5px;width:23px;height:23px" viewBox="0 0 24 24"><path d="M2 2H18L22 6V22H2Z" fill="none" stroke="#e3e3e3" stroke-width="1.8"/><g stroke="#f8c41e" stroke-width="2"><path d="M6 8H18"/></g><g stroke="#46cfd5" stroke-width="2"><path d="M6 12H18M6 16H18"/></g></svg>
<svg class="ic" style="left:965.5px;top:89.5px;width:23px;height:23px" viewBox="0 0 24 24"><circle cx="12" cy="12" r="10.5" fill="none" stroke="#e3e3e3" stroke-width="1.8"/><path d="M8.5 9Q8.5 5.5 12 5.5Q15.5 5.5 15.5 8.5Q15.5 10.5 12.5 12Q12 12.5 12 15" fill="none" stroke="#46cfd5" stroke-width="2.2"/><circle cx="12" cy="18" r="1.4" fill="#46cfd5"/></svg>
<svg class="ic" style="left:1007.5px;top:89.5px;width:23px;height:23px" viewBox="0 0 24 24"><circle cx="12" cy="12" r="10.5" fill="#e3e3e3"/><path d="M4.5 4.5Q12 10 19.5 4.5Q14 12 19.5 19.5Q12 14 4.5 19.5Q10 12 4.5 4.5Z" fill="#464646"/><circle cx="12" cy="12" r="2.2" fill="#e3e3e3"/></svg>
<svg class="ic" style="left:1040.5px;top:89.5px;width:23px;height:23px" viewBox="0 0 24 24"><path d="M3 1H13L20 8V22H3Z" fill="none" stroke="#46cfd5" stroke-width="1.8"/><path d="M7 10V3M4 6L7 3L10 6" stroke="#e3e3e3" stroke-width="1.8" fill="none"/><circle cx="14" cy="17" r="6" fill="#e3e3e3"/><path d="M10 14L13 20L17 13" stroke="#444" stroke-width="1.5" fill="none"/></svg>
<svg class="ic" style="left:1072.5px;top:89.5px;width:23px;height:23px" viewBox="0 0 24 24"><path d="M3 1H13L20 8V22H3Z" fill="none" stroke="#46cfd5" stroke-width="1.8"/><path d="M2 7H9M6 4L9 7L6 10" stroke="#e3e3e3" stroke-width="1.8" fill="none"/><circle cx="14" cy="17" r="6" fill="#e3e3e3"/><path d="M10 13Q14 16 18 13Q15 17 18 21Q14 18 10 21Q13 17 10 13Z" fill="#444"/></svg>
<svg class="ic" style="left:1104.5px;top:89.5px;width:23px;height:23px" viewBox="0 0 24 24"><g transform="translate(-2 -2)"><path d="M6 10H18Q20 10 19.5 14Q18.5 20.5 12 20.5Q5.5 20.5 4.5 14Q4 10 6 10Z M5.5 12.5L1 8.5L2 7.5L6.5 11Z M9 10Q12 6.5 15 10Z" fill="#46cfd5"/><circle cx="12" cy="7" r="1.3" fill="#46cfd5"/><path d="M18.5 11.5Q23 11 22 15Q21 17.5 18.5 17" fill="none" stroke="#46cfd5" stroke-width="1.8"/></g><rect x="12" y="12" width="10" height="11" rx="1" fill="#bbb" stroke="#555" stroke-width="0.8"/><g fill="#555"><rect x="14" y="15" width="6" height="1.2"/><rect x="14" y="17.5" width="6" height="1.2"/><rect x="14" y="20" width="6" height="1.2"/></g></svg>
<div class="sep" style="left:108px;top:92.0px;height:18px;width:2px;background:#151515"></div>
<div class="sep" style="left:180px;top:92.0px;height:18px;width:2px;background:#151515"></div>
<div class="sep" style="left:220px;top:92.0px;height:18px;width:2px;background:#151515"></div>
<div class="sep" style="left:485px;top:92.0px;height:18px;width:2px;background:#151515"></div>
<div class="sep" style="left:684px;top:92.0px;height:18px;width:2px;background:#151515"></div>
<div class="sep" style="left:820px;top:92.0px;height:18px;width:2px;background:#151515"></div>
<div class="a" style="left:892px;top:88.0px;width:3px;height:26px;background-image:radial-gradient(#bbb 0.8px,transparent 1px);background-size:3px 3px"></div>
<div class="a" style="left:998px;top:88.0px;width:3px;height:26px;background-image:radial-gradient(#bbb 0.8px,transparent 1px);background-size:3px 3px"></div>
<div class="cor" style="left:34px;top:111px;border-bottom-color:#dcdcdc"></div>
<div class="cor" style="left:713px;top:111px;border-bottom-color:#dcdcdc"></div>
<div class="cor" style="left:1062px;top:111px;border-bottom-color:#dcdcdc"></div>
<div class="cor" style="left:1126px;top:111px;border-bottom-color:#dcdcdc"></div>
<div class="a" style="left:2px;top:120px;width:28px;height:3px;background-image:radial-gradient(#aaa 0.8px,transparent 1px);background-size:3px 3px"></div>
<div class="a" style="left:35px;top:120px;width:35px;height:3px;background-image:radial-gradient(#aaa 0.8px,transparent 1px);background-size:3px 3px"></div>
<!-- render window -->
<div class="a" style="left:0;top:129px;width:1151px;height:818px;background:#2e2e2e"></div>
<div class="a" style="left:1147px;top:159px;width:2px;height:788px;background:#3c3c3c"></div>
<div class="a" style="left:1149px;top:159px;width:2px;height:788px;background:#262626"></div>
<div class="a" style="left:1146px;top:538px;width:4px;height:29px;background-image:radial-gradient(#9a9a9a 0.7px,transparent 0.9px);background-size:2px 2.4px"></div>
<div class="a" style="left:0;top:129px;width:1151px;height:30px;background:#ffffff"></div>
<div class="t" style="left:3px;top:136px;font-size:12.5px;line-height:15px;color:#a8a8a8">[100.0% of 1207 x 679]</div>
<div class="a" style="left:1031px;top:143px;width:11px;height:1px;background:#888"></div>
<div class="a" style="left:1077px;top:138px;width:10px;height:10px;border:1px solid #888"></div>
<svg class="ic" style="left:1123px;top:138px;width:11px;height:11px" viewBox="0 0 11 11"><path d="M0.5 0.5L10.5 10.5M10.5 0.5L0.5 10.5" stroke="#888" stroke-width="1"/></svg>
<div class="t" style="left:-7px;top:162px;font-size:13px;line-height:16px;color:#e0e0e0"><i class="c">视</i><i class="c">图</i></div>
<div class="t" style="left:30px;top:162px;font-size:13px;line-height:16px;color:#e0e0e0"><i class="c">选</i><i class="c">项</i></div>
<div class="t" style="left:1067px;top:163px;font-size:12.5px;line-height:16px;color:#e0e0e0"><i class="c">新</i><i class="c">版</i><i class="c">本</i><i class="c">可</i><i class="c">用</i>!</div>
<div class="a" style="left:0;top:181px;width:1145px;height:2px;background:#151515"></div>
<div class="a" style="left:-4px;top:191px;width:64px;height:18px;background:#3d3d3d;border:1px solid #1c1c1c;border-radius:3px"></div>
<div class="a" style="left:48px;top:198px;width:0;height:0;border-left:4px solid transparent;border-right:4px solid transparent;border-top:5px solid #8fc4ee"></div>
<div class="a" style="left:62px;top:184px;width:34px;height:33px;background:#3a4956;border-radius:2px"></div>
<div class="a" style="left:72px;top:193px;width:14px;height:14px;border-radius:50%;background:#f28a8a"></div>
<div class="a" style="left:97px;top:184px;width:34px;height:33px;background:#3a4956;border-radius:2px"></div>
<div class="a" style="left:107px;top:193px;width:14px;height:14px;border-radius:50%;background:#83e083"></div>
<div class="a" style="left:132px;top:184px;width:34px;height:33px;background:#3a4956;border-radius:2px"></div>
<div class="a" style="left:142px;top:193px;width:14px;height:14px;border-radius:50%;background:#8ad8f6"></div>
<svg class="ic" style="left:176px;top:193px;width:14px;height:14px" viewBox="0 0 14 14"><circle cx="7" cy="7" r="7" fill="#fff"/><path d="M7 0A7 7 0 0 0 0 7H7Z M7 7H14A7 7 0 0 1 7 14Z" fill="#aaa"/></svg>
<svg class="ic" style="left:836.0px;top:189.0px;width:22px;height:22px" viewBox="0 0 24 24"><path d="M2 2H18L22 6V22H2Z" fill="none" stroke="#e3e3e3" stroke-width="2"/><rect x="6" y="2" width="10" height="6" fill="none" stroke="#e3e3e3" stroke-width="1.8"/><rect x="5" y="13" width="14" height="9" fill="none" stroke="#e3e3e3" stroke-width="1.8"/></svg>
<svg class="ic" style="left:871.0px;top:189.0px;width:22px;height:22px" viewBox="0 0 24 24"><path d="M3 2H15L21 8V22H3Z" fill="none" stroke="#555" stroke-width="1.8"/><path d="M7 11L14 19M14 11L7 19" stroke="#555" stroke-width="2"/></svg>
<svg class="ic" style="left:906.0px;top:189.0px;width:22px;height:22px" viewBox="0 0 24 24"><g fill="#5ab4e6"><rect x="2" y="2" width="2.5" height="2.5"/><rect x="7" y="2" width="2.5" height="2.5"/><rect x="12" y="2" width="2.5" height="2.5"/><rect x="17" y="2" width="2.5" height="2.5"/><rect x="2" y="7" width="2.5" height="2.5"/><rect x="2" y="12" width="2.5" height="2.5"/><rect x="2" y="17" width="2.5" height="2.5"/><rect x="7" y="7" width="2.5" height="2.5"/></g><path d="M10 10L12 23L15 19L19 23L21 21L17 17L22 15Z" fill="#fff"/></svg>
<svg class="ic" style="left:941.0px;top:189.0px;width:22px;height:22px" viewBox="0 0 24 24"><text x="2" y="16" font-family="Liberation Sans" font-weight="bold" font-size="10" fill="#555">50%</text><path d="M2 3H20M2 21H20" stroke="#555" stroke-width="1.2"/></svg>
<svg class="ic" style="left:976.0px;top:189.0px;width:22px;height:22px" viewBox="0 0 24 24"><rect x="2" y="2" width="20" height="20" fill="none" stroke="#aaa" stroke-width="1.8"/><rect x="6" y="10" width="12" height="7" fill="none" stroke="#5ab4e6" stroke-width="1.8"/></svg>
<svg class="ic" style="left:1011.0px;top:189.0px;width:22px;height:22px" viewBox="0 0 24 24"><path d="M12 2L21 6V17L12 22L3 17V6Z" fill="#444" stroke="#6ec6f0" stroke-width="2"/><path d="M10 10L12 22L15 19L19 23L21 21L17 17L22 15Z" fill="#fff"/></svg>
<svg class="ic" style="left:1046.0px;top:189.0px;width:22px;height:22px" viewBox="0 0 24 24"><path d="M5 14A7 7 0 0 1 15 6" fill="none" stroke="#6edc6e" stroke-width="3"/><path d="M13 2L19 6L13 10Z" fill="#6edc6e"/><path d="M19 10A7 7 0 0 1 9 18" fill="none" stroke="#6edc6e" stroke-width="3"/><path d="M11 14L5 18L11 22Z" fill="#6edc6e"/></svg>
<svg class="ic" style="left:1081.0px;top:189.0px;width:22px;height:22px" viewBox="0 0 24 24"><path d="M6 10H18Q20 10 19.5 14Q18.5 20.5 12 20.5Q5.5 20.5 4.5 14Q4 10 6 10Z M5.5 12.5L1 8.5L2 7.5L6.5 11Z M9 10Q12 6.5 15 10Z" fill="none" stroke="#fff" stroke-width="1.6"/><path d="M18.5 11.5Q23 11 22 15Q21 17.5 18.5 17" fill="none" stroke="#fff" stroke-width="1.6"/><rect x="13" y="13" width="9" height="9" fill="#f58a8a"/></svg>
<svg class="ic" style="left:1116.0px;top:189.0px;width:22px;height:22px" viewBox="0 0 24 24"><path d="M6 10H18Q20 10 19.5 14Q18.5 20.5 12 20.5Q5.5 20.5 4.5 14Q4 10 6 10Z M5.5 12.5L1 8.5L2 7.5L6.5 11Z M9 10Q12 6.5 15 10Z" fill="none" stroke="#555" stroke-width="1.6"/><path d="M18.5 11.5Q23 11 22 15Q21 17.5 18.5 17" fill="none" stroke="#555" stroke-width="1.6"/></svg>
<div class="cor" style="left:860px;top:212px;border-bottom-color:#cfcfcf"></div>
<div class="cor" style="left:966px;top:212px;border-bottom-color:#cfcfcf"></div>
<div class="cor" style="left:1036px;top:212px;border-bottom-color:#cfcfcf"></div>
<div class="cor" style="left:1071px;top:212px;border-bottom-color:#cfcfcf"></div>
<div class="cor" style="left:1142px;top:212px;border-bottom-color:#cfcfcf"></div>
<div class="a" style="left:0;top:946px;width:1151px;height:1px;background:#4a4a4a"></div>
<div class="a" style="left:7px;top:923px;width:40px;height:18px;background:#2a2a2a;border:1px solid #555;border-radius:3px"></div>
<div class="t m" style="left:11px;top:925px;font-size:11px;color:#e0e0e0">1x1</div>
<div class="a" style="left:34px;top:930px;width:0;height:0;border-left:3.5px solid transparent;border-right:3.5px solid transparent;border-top:4px solid #8fc4ee"></div>
<div class="a" style="left:1px;top:920px;width:1px;height:25px;background:#aaa"></div>
<div class="a" style="left:52px;top:920px;width:1px;height:25px;background:#aaa"></div>
<div class="a" style="left:274px;top:920px;width:1px;height:25px;background:#aaa"></div>
<div class="a" style="left:455px;top:920px;width:1px;height:25px;background:#aaa"></div>
<svg class="ic" style="left:62px;top:923px;width:16px;height:16px" viewBox="0 0 16 16"><path d="M2 1V14H15M3 13Q5 4 14 3" fill="none" stroke="#ddd" stroke-width="1.3"/><circle cx="3" cy="14" r="2" fill="#ddd"/></svg>
<div class="t m" style="left:88px;top:925px;font-size:11.5px;font-weight:bold;color:#eee">Raw</div>
<div class="a" style="left:114px;top:925px;width:14px;height:14px;background:#000;border-radius:2px"></div>
<div class="t m" style="left:138px;top:925px;font-size:12px;color:#ff5a5a">0.000</div>
<div class="t m" style="left:185px;top:925px;font-size:12px;color:#5ae05a">0.000</div>
<div class="t m" style="left:232px;top:925px;font-size:12px;color:#5aaaff">0.000</div>
<div class="a" style="left:280px;top:923px;width:46px;height:19px;background:#2a2a2a;border:1px solid #555;border-radius:3px"></div>
<div class="t m" style="left:284px;top:925px;font-size:11.5px;color:#e0e0e0">HSV</div>
<div class="a" style="left:313px;top:931px;width:0;height:0;border-left:3.5px solid transparent;border-right:3.5px solid transparent;border-top:4px solid #8fc4ee"></div>
<div class="t m" style="left:345px;top:925px;font-size:12px;color:#e0e0e0">0</div>
<div class="t m" style="left:380px;top:925px;font-size:12px;color:#e0e0e0">0.0</div>
<div class="t m" style="left:421px;top:925px;font-size:12px;color:#e0e0e0">0.0</div>
<div class="a" style="left:461px;top:920px;width:17px;height:25px;background:#4a4a4a"></div>
<div class="t m" style="left:470px;top:926px;font-size:10.5px;letter-spacing:-0.3px;color:#8a8a8a">Rendering image (pass 10) [00:00:09.6] [00:06:03.8 est]</div>
<svg class="ic" style="left:1124px;top:925px;width:14px;height:14px" viewBox="0 0 14 14"><rect x="0.5" y="0.5" width="13" height="13" fill="none" stroke="#aaa"/><path d="M3 4H11M3 7H7M3 10H10" stroke="#fff" stroke-width="1.5"/><rect x="2" y="2" width="10" height="2" fill="#5ab4e6"/></svg>
<!-- render image -->
<svg class="a" style="left:0;top:228px;width:1116px;height:679px;background:#000" viewBox="0 228 1116 679">
<defs>
<filter id="gtex" x="0" y="0" width="1" height="1" color-interpolation-filters="sRGB">
 <feTurbulence type="fractalNoise" baseFrequency="0.65" numOctaves="2" seed="4" result="n"/>
 <feColorMatrix in="n" type="matrix" values="1.087 0 0 0 0.178  1.021 0 0 0 0.117  0.889 0 0 0 0.002  0 0 0 0 1"/>
</filter>
<filter id="rough" x="-3%" y="-3%" width="106%" height="106%" color-interpolation-filters="sRGB">
 <feTurbulence type="fractalNoise" baseFrequency="0.6" numOctaves="2" seed="5" result="t"/>
 <feDisplacementMap in="SourceGraphic" in2="t" scale="8" xChannelSelector="R" yChannelSelector="G"/>
</filter>
<filter id="fuzz" x="-10%" y="-10%" width="120%" height="120%" color-interpolation-filters="sRGB">
 <feGaussianBlur in="SourceGraphic" stdDeviation="5" result="b"/>
 <feTurbulence type="fractalNoise" baseFrequency="0.9" numOctaves="2" seed="8" result="n"/>
 <feColorMatrix in="n" type="matrix" values="0 0 0 0 0  0 0 0 0 0  0 0 0 0 0  3 0 0 0 -1" result="na"/>
 <feComposite in="b" in2="na" operator="arithmetic" k1="0" k2="1.3" k3="0.9" k4="-0.75" result="c"/>
 <feComponentTransfer in="c" result="th"><feFuncA type="discrete" tableValues="0 1"/></feComponentTransfer>
 <feFlood flood-color="#ffffff"/>
 <feComposite in2="th" operator="in"/>
</filter>
<filter id="spark" x="0" y="0" width="1" height="1" color-interpolation-filters="sRGB">
 <feTurbulence type="fractalNoise" baseFrequency="0.95" numOctaves="1" seed="13" result="n"/>
 <feColorMatrix in="n" type="matrix" values="0 0 0 0 1  0 0 0 0 1  0 0 0 0 1  6 0 0 0 -3.9"/>
</filter>
<mask id="fm"><path d="M271 373 L340 383 L429 399 L522 405 L849 429 L761 783 L0 655 L0 579Z" fill="#fff" filter="url(#rough)"/></mask>
</defs>
<path d="M0 650L762 774L761 784L0 660Z" fill="#ffffff"/>
<path d="M842 466L762 782" stroke="#fff" stroke-width="2.2" opacity="0.85"/>
<g mask="url(#fm)"><rect x="0" y="360" width="860" height="430" fill="#b09a72" filter="url(#gtex)"/><rect x="0" y="360" width="860" height="430" fill="#fff" filter="url(#spark)" opacity="0.7"/></g>
<g mask="url(#fm)"><path d="M425 399 L377 415 L337 445 L318 470 L324 500 L355 529 L396 570 L413 601 L401 637 L372 657 L334 683 L301 703 L449 731 L443 714 L477 693 L505 669 L522 635 L525 596 L510 563 L477 531 L438 500 L426 488 L421 461 L435 441 L480 425 L526 405Z" fill="#fff" filter="url(#fuzz)"/></g>
<path d="M433 399 L385 415 L345 445 L326 470 L332 500 L363 529 L404 570 L421 601 L409 637 L380 657 L342 683 L309 703 L441 731 L435 714 L469 693 L497 669 L514 635 L517 596 L502 563 L469 531 L430 500 L418 488 L413 461 L427 441 L472 425 L518 405Z" fill="#fff" opacity="0"/>
<path d="M30 430L32 440M34 431L32 440M28 436L32 440" stroke="#8a7050" stroke-width="1"/>
</svg>
<!-- viewport content -->
<svg class="a" style="left:1151px;top:280px;width:220px;height:600px" viewBox="1151 280 220 600">
<defs>
<linearGradient id="bias" x1="0" y1="0" x2="0" y2="1">
 <stop offset="0" stop-color="#fff" stop-opacity="0.62"/>
 <stop offset="0.4" stop-color="#fff" stop-opacity="0.53"/>
 <stop offset="1" stop-color="#fff" stop-opacity="0.43"/>
</linearGradient>
<filter id="blob" x="0" y="0" width="1" height="1" color-interpolation-filters="sRGB">
 <feTurbulence type="fractalNoise" baseFrequency="0.04" numOctaves="4" seed="21" result="n"/>
 <feColorMatrix in="n" type="matrix" values="0 0 0 0 0  0 0 0 0 0  0 0 0 0 0  3 0 0 0 -1" result="na"/>
 <feComposite in="SourceGraphic" in2="na" operator="arithmetic" k2="1" k3="1" k4="-0.5" result="c"/>
 <feComponentTransfer in="c" result="th"><feFuncA type="discrete" tableValues="0 1"/></feComponentTransfer>
 <feFlood flood-color="#878787"/>
 <feComposite in2="th" operator="in"/>
</filter>
<filter id="pix" x="0" y="0" width="1" height="1">
 <feMorphology operator="dilate" radius="0.5"/>
</filter>
<filter id="jag" x="-20%" y="-20%" width="140%" height="140%">
 <feTurbulence type="fractalNoise" baseFrequency="0.25" numOctaves="2" seed="3" result="t"/>
 <feDisplacementMap in="SourceGraphic" in2="t" scale="9" xChannelSelector="R" yChannelSelector="G"/>
</filter>
<clipPath id="pk"><path d="M1151 382L1346 402L1228 864L1151 853Z"/></clipPath>
</defs>
<path d="M1151 382L1346 402L1228 864L1151 853Z" fill="#f2dadd"/>
<g clip-path="url(#pk)"><rect x="1151" y="360" width="220" height="520" fill="url(#bias)" filter="url(#blob)"/></g>
<path d="M1156 394 L1160 379 L1164 377 L1168 368 L1172 367 L1175 368 L1179 376 L1183 376 L1187 394Z M1201 398 L1204 379 L1206 380 L1209 377 L1212 370 L1215 374 L1218 374 L1220 385 L1223 398Z M1247 403 L1250 387 L1252 379 L1254 382 L1257 375 L1260 379 L1262 379 L1264 387 L1267 403Z M1268 405 L1272 388 L1276 379 L1280 381 L1284 378 L1288 376 L1292 382 L1296 390 L1300 405Z M1306 408 L1308 391 L1311 389 L1314 389 L1316 388 L1318 388 L1321 392 L1324 397 L1326 408Z M1326 411 L1329 403 L1332 400 L1335 399 L1338 395 L1341 401 L1344 403 L1347 405 L1350 411Z" fill="#878787" filter="url(#jag)"/>
<path d="M1151 298L1232 290" stroke="#8a9a3a" stroke-width="1"/>
</svg>
<!-- command panel -->
<div class="a" style="left:1711px;top:118px;width:209px;height:908px;background:#464646"></div>
<div class="a" style="left:1716px;top:121px;width:204px;height:3px;background-image:radial-gradient(#bbb 0.8px,transparent 1px);background-size:3px 3px"></div>
<div class="a" style="left:1714px;top:127px;width:206px;height:28px;background:#3b3b3b"></div>
<div class="a" style="left:1747px;top:128px;width:30px;height:28px;background:#4a4a4a"></div>
<div class="a" style="left:1809px;top:131px;width:1px;height:22px;background:#333"></div>
<div class="a" style="left:1841px;top:131px;width:1px;height:22px;background:#333"></div>
<div class="a" style="left:1873px;top:131px;width:1px;height:22px;background:#333"></div>
<div class="a" style="left:1905px;top:131px;width:1px;height:22px;background:#333"></div>
<svg class="ic" style="left:1720.0px;top:131.0px;width:20px;height:20px" viewBox="0 0 24 24"><path d="M12 3V21M3 12H21" stroke="#e3e3e3" stroke-width="2.2"/></svg>
<svg class="ic" style="left:1752.0px;top:131.0px;width:20px;height:20px" viewBox="0 0 24 24"><rect x="4" y="4" width="16" height="16" fill="none" stroke="#46cfd5" stroke-width="1.5"/><g fill="#3b3b3b" stroke="#46cfd5" stroke-width="1.2"><rect x="2.5" y="2.5" width="3" height="3"/><rect x="18.5" y="2.5" width="3" height="3"/><rect x="2.5" y="18.5" width="3" height="3"/><rect x="18.5" y="18.5" width="3" height="3"/></g><path d="M7 18Q8 9 17 7" fill="none" stroke="#e3e3e3" stroke-width="2"/></svg>
<svg class="ic" style="left:1784.0px;top:131.0px;width:20px;height:20px" viewBox="0 0 24 24"><rect x="6" y="3" width="12" height="5" fill="#e3e3e3"/><path d="M12 8V11M6 11H18M6 11V17M18 11V17" stroke="#46cfd5" stroke-width="1.5" fill="none"/><rect x="4" y="16" width="4" height="4" fill="#46cfd5"/><rect x="16" y="16" width="4" height="4" fill="#46cfd5"/><rect x="10" y="10" width="4" height="2" fill="#46cfd5"/></svg>
<svg class="ic" style="left:1816.0px;top:131.0px;width:20px;height:20px" viewBox="0 0 24 24"><circle cx="14" cy="12" r="7" fill="#e3e3e3"/><path d="M7 5A9 9 0 0 0 7 19M4 6A9 9 0 0 0 4 18" stroke="#46cfd5" stroke-width="1" fill="none"/></svg>
<svg class="ic" style="left:1848.0px;top:131.0px;width:20px;height:20px" viewBox="0 0 24 24"><rect x="3" y="4" width="18" height="11" fill="#e3e3e3"/><rect x="10" y="16" width="4" height="2" fill="#e3e3e3"/><rect x="7" y="18" width="10" height="1.5" fill="#e3e3e3"/></svg>
<svg class="ic" style="left:1880.0px;top:131.0px;width:20px;height:20px" viewBox="0 0 24 24"><path d="M6 5L19 19" stroke="#e3e3e3" stroke-width="3"/><circle cx="6" cy="6" r="3.5" fill="none" stroke="#e3e3e3" stroke-width="2"/><circle cx="19" cy="19" r="1.5" fill="none" stroke="#e3e3e3" stroke-width="1"/></svg>
<div class="a" style="left:1717px;top:160px;width:179px;height:20px;background:#6e6e6e"></div>
<div class="t m" style="left:1722px;top:163px;font-size:11px;color:#f0f0f0">Chaos Scatter001</div>
<div class="a" style="left:1900px;top:160px;width:22px;height:21px;background:#3a9ee2;border:1px solid #111"></div>
<div class="a" style="left:1718px;top:186px;width:202px;height:19px;background:#6b6b6b"></div>
<div class="t" style="left:1721px;top:188px;font-size:12.5px;line-height:15px;color:#eee"><i class="c">修</i><i class="c">改</i><i class="c">器</i><i class="c">列</i><i class="c">表</i></div>
<div class="a" style="left:1907px;top:193px;width:0;height:0;border-left:4px solid transparent;border-right:4px solid transparent;border-top:5px solid #eee"></div>
<div class="a" style="left:1720px;top:217px;width:96px;height:18px;background:#5a5a5a;border-radius:3px;overflow:hidden"><div style="position:absolute;left:0;width:96px;top:1px;text-align:center;font-size:12px;line-height:16px;color:#bdbdbd;white-space:nowrap" class="m"><i class="c">挤</i><i class="c">出</i></div></div>
<div class="a" style="left:1822px;top:217px;width:96px;height:18px;background:#5a5a5a;border-radius:3px;overflow:hidden"><div style="position:absolute;left:0;width:96px;top:1px;text-align:center;font-size:12px;line-height:16px;color:#bdbdbd;white-space:nowrap" class="m">UVW <i class="c">贴</i><i class="c">图</i></div></div>
<div class="a" style="left:1720px;top:240px;width:96px;height:18px;background:#5a5a5a;border-radius:3px;overflow:hidden"><div style="position:absolute;left:0;width:96px;top:1px;text-align:center;font-size:12px;line-height:16px;color:#bdbdbd;white-space:nowrap" class="m"><i class="c">涡</i><i class="c">轮</i><i class="c">平</i><i class="c">滑</i></div></div>
<div class="a" style="left:1822px;top:240px;width:96px;height:18px;background:#606060;border-radius:3px;overflow:hidden"><div style="position:absolute;left:0;width:96px;top:1px;text-align:center;font-size:12px;line-height:16px;color:#f4f4f4;white-space:nowrap" class="m"><i class="c">法</i><i class="c">线</i></div></div>
<div class="a" style="left:1720px;top:262px;width:96px;height:18px;background:#5a5a5a;border-radius:3px;overflow:hidden"><div style="position:absolute;left:0;width:96px;top:1px;text-align:center;font-size:12px;line-height:16px;color:#bdbdbd;white-space:nowrap" class="m"><i class="c">壳</i></div></div>
<div class="a" style="left:1822px;top:262px;width:96px;height:18px;background:#5a5a5a;border-radius:3px;overflow:hidden"><div style="position:absolute;left:0;width:96px;top:1px;text-align:center;font-size:10.6px;letter-spacing:-0.45px;line-height:16px;color:#bdbdbd;white-space:nowrap" class="m">FloorGenerator[<i class="c">才</i></div></div>
<div class="a" style="left:1717px;top:289px;width:205px;height:127px;background:#464646;border:2px solid #f2f2f2;border-right:none"></div>
<div class="a" style="left:1719px;top:291px;width:19px;height:16px;background:#353535"></div>
<div class="a" style="left:1724px;top:294px;width:0;height:0;border-top:5px solid transparent;border-bottom:5px solid transparent;border-left:8px solid #f0f0f0"></div>
<div class="a" style="left:1738px;top:291px;width:182px;height:16px;background:#6ea6dc"></div>
<div class="t m" style="left:1740px;top:292px;font-size:11px;color:#fff">ChaosScatter</div>
<div class="a" style="left:1754px;top:423px;width:22px;height:22px;background:#5e9bd8;border-radius:3px"></div>
<svg class="ic" style="left:1718.0px;top:424.0px;width:20px;height:20px" viewBox="0 0 24 24"><path d="M2 22L10 14" stroke="#e3e3e3" stroke-width="1.5"/><path d="M9 9L15 3L21 9L15 15Z" fill="#e3e3e3"/></svg>
<svg class="ic" style="left:1755.0px;top:424.0px;width:20px;height:20px" viewBox="0 0 24 24"><rect x="9" y="4" width="6" height="16" rx="1" fill="#aee8e0" stroke="#222" stroke-width="1"/><rect x="7" y="3" width="10" height="3" fill="#fff" stroke="#222" stroke-width="0.8"/></svg>
<svg class="ic" style="left:1791.0px;top:424.0px;width:20px;height:20px" viewBox="0 0 24 24"><circle cx="8" cy="7" r="5" fill="#555" stroke="#333"/><circle cx="12" cy="16" r="5" fill="none" stroke="#333" stroke-width="1.5"/><circle cx="16" cy="14" r="5" fill="none" stroke="#333" stroke-width="1.5"/></svg>
<svg class="ic" style="left:1815.0px;top:424.0px;width:20px;height:20px" viewBox="0 0 24 24"><path d="M6 7H18L17 22H7Z M4 5H20M10 3H14" fill="none" stroke="#333" stroke-width="1.8"/></svg>
<svg class="ic" style="left:1850.0px;top:424.0px;width:20px;height:20px" viewBox="0 0 24 24"><rect x="3" y="4" width="15" height="17" fill="#fff"/><g fill="#333"><rect x="5" y="8" width="4" height="4"/><rect x="11" y="8" width="4" height="4"/><rect x="5" y="14" width="4" height="4"/><rect x="11" y="14" width="4" height="4"/></g><path d="M10 14L20 3" stroke="#f8c41e" stroke-width="2.5"/></svg>
<div class="a" style="left:1747px;top:426px;width:2px;height:16px;background:#151515"></div>
<div class="a" style="left:1783px;top:426px;width:2px;height:16px;background:#151515"></div>
<div class="a" style="left:1843px;top:426px;width:2px;height:16px;background:#151515"></div>
<div class="a" style="left:1722px;top:471px;width:86px;height:1px;background:#6a6a6a"></div>
<div class="a" style="left:1829px;top:471px;width:87px;height:1px;background:#6a6a6a"></div>
<div class="a" style="left:1811px;top:469px;width:15px;height:5px;background-image:radial-gradient(#ccc 0.7px,transparent 0.9px);background-size:2.5px 2.5px"></div>
<div class="a" style="left:1914px;top:476px;width:6px;height:550px;background:#3a3a3a"></div>
<div class="a" style="left:1916px;top:500px;width:4px;height:520px;background:#505050"></div>
<div class="a" style="left:1717px;top:476px;width:196px;height:325px;background:#555555;border-radius:3px"></div>
<div class="a" style="left:1737px;top:477px;width:20px;height:4px;background:#ddd;opacity:0.6"></div>
<div class="t" style="left:1736px;top:487px;font-size:12.5px;line-height:16px;color:#eeeeee;"><i class="c">样</i><i class="c">条</i><i class="c">线</i><i class="c">包</i><i class="c">括</i>:</div>
<div class="t" style="left:1829px;top:487px;font-size:12.5px;line-height:16px;color:#eeeeee;"><i class="c">近</i>:</div>
<div class="t" style="left:1866px;top:487px;font-size:12.5px;line-height:16px;color:#eeeeee;"><i class="c">远</i>:</div>
<div class="a" style="left:1734px;top:506px;width:161px;height:73px;background:#484848;border:1px solid #a8a8a8"></div>
<div class="a" style="left:1735px;top:581px;width:78px;height:21px;background:#686868;border-radius:3px"><div style="position:absolute;left:0;right:0;top:3.5px;text-align:center;font-size:12px;line-height:14px;color:#eee;white-space:nowrap">+</div></div>
<div class="a" style="left:1816px;top:581px;width:78px;height:21px;background:#686868;border-radius:3px"><div style="position:absolute;left:0;right:0;top:3.5px;text-align:center;font-size:12px;line-height:14px;color:#eee;white-space:nowrap">–</div></div>
<div class="t" style="left:1741px;top:605px;font-size:12.5px;line-height:16px;color:#eeeeee;"><i class="c">样</i><i class="c">条</i><i class="c">线</i><i class="c">排</i><i class="c">除</i>:</div>
<div class="t" style="left:1829px;top:605px;font-size:12.5px;line-height:16px;color:#eeeeee;"><i class="c">近</i>:</div>
<div class="t" style="left:1866px;top:605px;font-size:12.5px;line-height:16px;color:#eeeeee;"><i class="c">远</i>:</div>
<div class="a" style="left:1734px;top:624px;width:161px;height:73px;background:#484848;border:1px solid #a8a8a8"></div>
<div class="a" style="left:1756px;top:626px;width:137px;height:16px;background:#ffffff"></div>
<div class="a" style="left:1740px;top:628px;width:12px;height:12px;background:#fff;border:1px solid #999"></div>
<svg class="ic" style="left:1740px;top:628px;width:12px;height:12px" viewBox="0 0 12 12"><path d="M2 6L5 9L10 3" stroke="#333" stroke-width="1.5" fill="none"/></svg>
<div class="t m" style="left:1757px;top:627px;font-size:11px;color:#222">Line001</div>
<div class="t" style="left:1826px;top:627px;font-size:11px;color:#111">5.18</div>
<div class="t" style="left:1862px;top:627px;font-size:11px;color:#111">300</div>
<div class="a" style="left:1750px;top:636px;width:26px;height:26px;border-radius:50%;background:radial-gradient(circle,rgba(170,160,60,0.75) 0,rgba(150,140,50,0.55) 55%,rgba(100,100,60,0) 100%)"></div>
<svg class="ic" style="left:1762px;top:642px;width:12px;height:19px" viewBox="0 0 12 19"><path d="M1 1V15L4.5 11.5L7.5 18L9.5 17L6.5 10.5H11Z" fill="#fff" stroke="#000" stroke-width="1"/></svg>
<div class="a" style="left:1735px;top:700px;width:78px;height:21px;background:#686868;border-radius:3px"><div style="position:absolute;left:0;right:0;top:3.5px;text-align:center;font-size:12px;line-height:14px;color:#eee;white-space:nowrap">+</div></div>
<div class="a" style="left:1816px;top:700px;width:78px;height:21px;background:#686868;border-radius:3px"><div style="position:absolute;left:0;right:0;top:3.5px;text-align:center;font-size:12px;line-height:14px;color:#eee;white-space:nowrap">–</div></div>
<div class="t" style="left:1769px;top:727px;font-size:12.5px;line-height:16px;color:#eeeeee;"><i class="c">样</i><i class="c">条</i><i class="c">线</i><i class="c">排</i><i class="c">除</i><i class="c">选</i><i class="c">项</i>:</div>
<div class="t" style="left:1743px;top:746px;font-size:12.5px;line-height:16px;color:#eeeeee;"><i class="c">近</i>:</div>
<div class="a" style="left:1762px;top:747px;width:54px;height:14px;background:#676767"></div>
<div class="t" style="left:1765px;top:747.0px;font-size:11.5px;line-height:14px;color:#e8e8e8">5.18</div>
<svg class="ic" style="left:1805px;top:749.0px;width:8px;height:10px" viewBox="0 0 8 10"><path d="M1 4L4 1L7 4ZM1 6L4 9L7 6Z" fill="#e8e8e8"/></svg>
<div class="t" style="left:1822px;top:746px;font-size:12.5px;line-height:16px;color:#eeeeee;"><i class="c">远</i>:</div>
<div class="a" style="left:1842px;top:747px;width:52px;height:14px;background:#676767"></div>
<div class="t" style="left:1845px;top:747.0px;font-size:11.5px;line-height:14px;color:#e8e8e8">300.0</div>
<svg class="ic" style="left:1883px;top:749.0px;width:8px;height:10px" viewBox="0 0 8 10"><path d="M1 4L4 1L7 4ZM1 6L4 9L7 6Z" fill="#e8e8e8"/></svg>
<div class="t" style="left:1733px;top:763px;font-size:12.5px;line-height:16px;color:#eeeeee;"><i class="c">比</i><i class="c">例</i>:</div>
<div class="a" style="left:1764px;top:765px;width:41px;height:14px;background:#676767"></div>
<div class="t" style="left:1767px;top:765.0px;font-size:11.5px;line-height:14px;color:#e8e8e8">1.0</div>
<svg class="ic" style="left:1794px;top:767.0px;width:8px;height:10px" viewBox="0 0 8 10"><path d="M1 4L4 1L7 4ZM1 6L4 9L7 6Z" fill="#e8e8e8"/></svg>
<div class="t" style="left:1821px;top:763px;font-size:12.5px;line-height:16px;color:#eeeeee;"><i class="c">密</i><i class="c">度</i>:</div>
<div class="a" style="left:1852px;top:765px;width:42px;height:14px;background:#676767"></div>
<div class="t" style="left:1855px;top:765.0px;font-size:11.5px;line-height:14px;color:#e8e8e8">1.0</div>
<svg class="ic" style="left:1883px;top:767.0px;width:8px;height:10px" viewBox="0 0 8 10"><path d="M1 4L4 1L7 4ZM1 6L4 9L7 6Z" fill="#e8e8e8"/></svg>
<div class="t" style="left:1769px;top:781px;font-size:12.5px;line-height:16px;color:#eeeeee;"><i class="c">投</i><i class="c">射</i>:</div>
<div class="a" style="left:1804px;top:782px;width:14px;height:14px;border-radius:50%;background:#6a6a6a;box-shadow:0 0 0 1px #4c4c4c"></div>
<div class="t m" style="left:1821px;top:783px;font-size:10px;line-height:12px;color:#eee;font-weight:bold">X</div>
<div class="a" style="left:1833px;top:782px;width:14px;height:14px;border-radius:50%;background:#6a6a6a;box-shadow:0 0 0 1px #4c4c4c"></div>
<div class="t m" style="left:1850px;top:783px;font-size:10px;line-height:12px;color:#eee;font-weight:bold">Y</div>
<div class="a" style="left:1861px;top:782px;width:14px;height:14px;border-radius:50%;background:#6a6a6a;box-shadow:0 0 0 1px #4c4c4c"></div>
<div class="a" style="left:1863px;top:784px;width:10px;height:10px;border-radius:50%;background:#f0f0f0"></div>
<div class="t m" style="left:1878px;top:783px;font-size:10px;line-height:12px;color:#eee;font-weight:bold">Z</div>
<div class="a" style="left:1717px;top:804px;width:196px;height:197px;background:#555555;border-radius:3px"></div>
<div class="a" style="left:1723px;top:811px;width:0;height:0;border-left:4px solid transparent;border-right:4px solid transparent;border-top:6px solid #ccc"></div>
<div class="t" style="left:1736px;top:805px;font-size:13px;line-height:16px;color:#ffffff;font-weight:bold"><i class="c">视</i><i class="c">口</i><i class="c">显</i><i class="c">示</i></div>
<div class="a" style="left:1899px;top:808px;width:9px;height:9px;background-image:radial-gradient(#bbb 0.7px,transparent 0.9px);background-size:3px 3px"></div>
<div class="a" style="left:1735px;top:832px;width:157px;height:102px;border:1.5px solid #3a3a3a;border-radius:3px"></div>
<div class="a" style="left:1737px;top:824px;width:30px;height:14px;background:#555"></div>
<div class="t" style="left:1739px;top:824px;font-size:12.5px;line-height:16px;color:#eeeeee;"><i class="c">实</i><i class="c">例</i></div>
<div class="t" style="left:1737px;top:844px;font-size:12.5px;line-height:16px;color:#eeeeee;"><span class="m" style="font-size:11px;font-weight:bold">reviz</span><i class="c">类</i><i class="c">型</i>:</div>
<div class="a" style="left:1800px;top:844px;width:88px;height:18px;background:#6e6e6e"></div>
<div class="t" style="left:1804px;top:845px;font-size:12.5px;line-height:16px;color:#eeeeee;"><i class="c">点</i><i class="c">云</i></div>
<div class="a" style="left:1874px;top:850px;width:0;height:0;border-left:4px solid transparent;border-right:4px solid transparent;border-top:5px solid #eee"></div>
<div class="t" style="left:1746px;top:866px;font-size:12.5px;line-height:16px;color:#f2b21e;"><i class="c">最</i><i class="c">大</i><i class="c">实</i><i class="c">例</i><i class="c">数</i>:</div>
<div class="a" style="left:1815px;top:867px;width:73px;height:15px;background:#676767"></div>
<div class="t" style="left:1818px;top:867.5px;font-size:11.5px;line-height:14px;color:#e8e8e8">1000</div>
<svg class="ic" style="left:1877px;top:869.5px;width:8px;height:10px" viewBox="0 0 8 10"><path d="M1 4L4 1L7 4ZM1 6L4 9L7 6Z" fill="#e8e8e8"/></svg>
<div class="t" style="left:1740px;top:882px;font-size:12.5px;line-height:16px;color:#eeeeee;"><i class="c">最</i><i class="c">大</i><i class="c">多</i><i class="c">边</i><i class="c">形</i><i class="c">数</i></div>
<div class="a" style="left:1815px;top:884px;width:73px;height:14px;background:#676767"></div>
<div class="t" style="left:1818px;top:884.0px;font-size:11.5px;line-height:14px;color:#9a9a9a">10000000</div>
<svg class="ic" style="left:1877px;top:886.0px;width:8px;height:10px" viewBox="0 0 8 10"><path d="M1 4L4 1L7 4ZM1 6L4 9L7 6Z" fill="#9a9a9a"/></svg>
<div class="t" style="left:1770px;top:898px;font-size:12.5px;line-height:16px;color:#eeeeee;"><i class="c">点</i> [%]:</div>
<div class="a" style="left:1815px;top:900px;width:73px;height:14px;background:#676767"></div>
<div class="t" style="left:1818px;top:900.0px;font-size:11.5px;line-height:14px;color:#e8e8e8">1.0</div>
<svg class="ic" style="left:1877px;top:902.0px;width:8px;height:10px" viewBox="0 0 8 10"><path d="M1 4L4 1L7 4ZM1 6L4 9L7 6Z" fill="#e8e8e8"/></svg>
<div class="a" style="left:1741px;top:918px;width:12px;height:12px;background:#6a6a6a"></div>
<svg class="ic" style="left:1741px;top:918px;width:12px;height:12px" viewBox="0 0 12 12"><path d="M2.5 6L5 9L10 3" stroke="#eee" stroke-width="2" fill="none"/></svg>
<div class="t" style="left:1758px;top:916px;font-size:12.5px;line-height:16px;color:#eeeeee;"><i class="c">原</i><i class="c">始</i><i class="c">线</i><i class="c">颜</i><i class="c">色</i></div>
<div class="t" style="left:1752px;top:938px;font-size:12.5px;line-height:16px;color:#eeeeee;"><i class="c">图</i><i class="c">标</i><i class="c">大</i><i class="c">小</i>:</div>
<div class="a" style="left:1813px;top:940px;width:78px;height:15px;background:#676767"></div>
<div class="t" style="left:1816px;top:940.5px;font-size:11.5px;line-height:14px;color:#dcdcdc">793.234</div>
<svg class="ic" style="left:1880px;top:942.5px;width:8px;height:10px" viewBox="0 0 8 10"><path d="M1 4L4 1L7 4ZM1 6L4 9L7 6Z" fill="#dcdcdc"/></svg>
<div class="a" style="left:1738px;top:962px;width:12px;height:12px;background:#6a6a6a"></div>
<svg class="ic" style="left:1738px;top:962px;width:12px;height:12px" viewBox="0 0 12 12"><path d="M2.5 6L5 9L10 3" stroke="#eee" stroke-width="2" fill="none"/></svg>
<div class="t" style="left:1755px;top:960px;font-size:12.5px;line-height:16px;color:#eeeeee;"><i class="c">自</i><i class="c">动</i><i class="c">更</i><i class="c">新</i></div>
<div class="a" style="left:1737px;top:977px;width:154px;height:21px;background:#676767;border-radius:3px"><div style="position:absolute;left:0;right:0;top:3.5px;text-align:center;font-size:12.5px;line-height:14px;color:#eee;white-space:nowrap"><i class="c">立</i><i class="c">即</i><i class="c">更</i><i class="c">新</i></div></div>
<div class="a" style="left:1717px;top:1005px;width:196px;height:22px;background:#555555;border-radius:3px"></div>
<div class="a" style="left:1725px;top:1010px;width:0;height:0;border-top:4px solid transparent;border-bottom:4px solid transparent;border-left:5px solid #ccc"></div>
<div class="t" style="left:1736px;top:1006px;font-size:13px;line-height:16px;color:#ffffff;font-weight:bold"><i class="c">信</i><i class="c">息</i></div>
<div class="a" style="left:1899px;top:1009px;width:9px;height:9px;background-image:radial-gradient(#bbb 0.7px,transparent 0.9px);background-size:3px 3px"></div>
<!-- bottom -->
<div class="a" style="left:33px;top:947px;width:41px;height:79px;background:#3a3a3a"></div>
<div class="a" style="left:43px;top:951px;width:20px;height:19px;background:#5a5a5a;border-radius:2px"></div>
<div class="a" style="left:50px;top:956px;width:0;height:0;border-top:5px solid transparent;border-bottom:5px solid transparent;border-left:7px solid #eee"></div>
<div class="a" style="left:37px;top:981px;width:36px;height:45px;background:linear-gradient(#5f84bd,#4a9af0);border-radius:4px 4px 0 0"></div>
<div class="a" style="left:40px;top:987px;width:31px;height:27px;background:linear-gradient(#6f7d90,#8da0b8);border:1px solid #2a3a50"></div>
<svg class="ic" style="left:70px;top:960px;width:50px;height:60px" viewBox="70 960 50 60"><path d="M103 999V973" stroke="#2020e0" stroke-width="1.6"/><path d="M103 999H89" stroke="#e02020" stroke-width="1.6"/><path d="M103 999L98 1013" stroke="#20c020" stroke-width="1.4"/><text x="103" y="977" font-size="9" fill="#2a2ae8" font-family="Liberation Sans" font-weight="bold">Z</text><text x="80" y="999" font-size="8" fill="#e02a2a" font-family="Liberation Sans" font-weight="bold">X</text><text x="96" y="1014" font-size="8" fill="#2ac02a" font-family="Liberation Sans" font-weight="bold">Y</text></svg>
<div class="a" style="left:5px;top:1031px;width:1px;height:49px;background:#222"></div>
<div class="t" style="left:10px;top:1037px;font-size:12.5px;line-height:16px;color:#eee"><i class="c">选</i><i class="c">择</i><i class="c">了</i> <span class="m" style="font-size:11px">1</span> <i class="c">个</i> <i class="c">对</i><i class="c">象</i></div>
<div class="t" style="left:10px;top:1061px;font-size:12.5px;line-height:16px;color:#eee"><i class="c">渲</i><i class="c">染</i><i class="c">时</i><i class="c">间</i> &nbsp;<span style="font-size:11.5px">0:00:00</span></div>
<svg class="ic" style="left:986.0px;top:1035.0px;width:18px;height:18px" viewBox="0 0 24 24"><path d="M2 6V2H6M18 2H22V6M22 18V22H18M6 22H2V18" stroke="#e3e3e3" stroke-width="1.8" fill="none"/><rect x="7" y="7" width="10" height="10" fill="#46cfd5"/></svg>
<svg class="ic" style="left:1013.0px;top:1035.0px;width:18px;height:18px" viewBox="0 0 24 24"><path d="M7 11V7A5 5 0 0 1 17 7V11" stroke="#e3e3e3" stroke-width="2.2" fill="none"/><rect x="5" y="11" width="14" height="11" fill="#e3e3e3"/><circle cx="12" cy="16" r="1.8" fill="#444"/></svg>
<svg class="ic" style="left:1039.0px;top:1035.0px;width:18px;height:18px" viewBox="0 0 24 24"><rect x="2" y="2" width="20" height="20" fill="none" stroke="#e3e3e3" stroke-width="2"/><path d="M12 4L20 12L12 20L4 12Z" fill="#e3e3e3"/><circle cx="12" cy="12" r="3" fill="#444"/></svg>
<div class="t m" style="left:1064px;top:1037px;font-size:11px;color:#eee;font-weight:bold">X:</div>
<div class="t m" style="left:1151px;top:1037px;font-size:11px;color:#eee;font-weight:bold">Y:</div>
<div class="t m" style="left:1236px;top:1037px;font-size:11px;color:#eee;font-weight:bold">Z:</div>
<div class="a" style="left:1080px;top:1036px;width:68px;height:17px;background:#5e5e5e"></div>
<div class="t" style="left:1083px;top:1037.5px;font-size:11.5px;line-height:14px;color:#e8e8e8">11207.739</div>
<svg class="ic" style="left:1137px;top:1039.5px;width:8px;height:10px" viewBox="0 0 8 10"><path d="M1 4L4 1L7 4ZM1 6L4 9L7 6Z" fill="#e8e8e8"/></svg>
<div class="a" style="left:1166px;top:1036px;width:68px;height:17px;background:#5e5e5e"></div>
<div class="t" style="left:1169px;top:1037.5px;font-size:11.5px;line-height:14px;color:#e8e8e8">1531.262</div>
<svg class="ic" style="left:1223px;top:1039.5px;width:8px;height:10px" viewBox="0 0 8 10"><path d="M1 4L4 1L7 4ZM1 6L4 9L7 6Z" fill="#e8e8e8"/></svg>
<div class="a" style="left:1252px;top:1036px;width:68px;height:17px;background:#5e5e5e"></div>
<div class="t" style="left:1255px;top:1037.5px;font-size:11.5px;line-height:14px;color:#e8e8e8">0.0</div>
<svg class="ic" style="left:1309px;top:1039.5px;width:8px;height:10px" viewBox="0 0 8 10"><path d="M1 4L4 1L7 4ZM1 6L4 9L7 6Z" fill="#e8e8e8"/></svg>
<div class="t" style="left:1325px;top:1037px;font-size:12.5px;line-height:16px;color:#eee"><i class="c">栅</i><i class="c">格</i> = 10.0</div>
<div class="a" style="left:1184px;top:1059px;width:2px;height:18px;background:#151515"></div>
<div class="a" style="left:1191px;top:1059px;width:19px;height:19px;background:#5e5e5e;border-radius:2px"></div>
<svg class="ic" style="left:1192.5px;top:1060.5px;width:15px;height:15px" viewBox="0 0 24 24"><path d="M12 2L21 5V12Q21 19 12 22Q3 19 3 12V5Z" fill="#e3e3e3"/><path d="M12 4V20Q5 17 5 12V6Z" fill="#777"/></svg>
<div class="t" style="left:1217px;top:1061px;font-size:12.5px;line-height:16px;color:#eee"><i class="c">禁</i><i class="c">用</i>:</div>
<div class="a" style="left:1251px;top:1063px;width:10px;height:10px;border-radius:50%;background:#ee4444"></div>
<div class="a" style="left:1267px;top:1059px;width:19px;height:19px;background:#5e5e5e;border-radius:2px"></div>
<div class="a" style="left:1269px;top:1061px;width:15px;height:15px;border-radius:50%;background:#fff"></div>
<div class="t" style="left:1273px;top:1062px;font-size:10px;line-height:13px;color:#333">0</div>
<div class="a" style="left:1294px;top:1059px;width:2px;height:18px;background:#151515"></div>
<svg class="ic" style="left:1301.0px;top:1061.0px;width:14px;height:14px" viewBox="0 0 24 24"><path d="M12 2L21 7V17L12 22L3 17V7Z M3 7L12 12L21 7M12 12V22" fill="none" stroke="#e3e3e3" stroke-width="1.8"/></svg>
<div class="t" style="left:1324px;top:1061px;font-size:12.5px;line-height:16px;color:#eee"><i class="c">添</i><i class="c">加</i><i class="c">时</i><i class="c">间</i><i class="c">标</i><i class="c">记</i></div>
<svg class="ic" style="left:1436.5px;top:1035.5px;width:17px;height:17px" viewBox="0 0 24 24"><path d="M3 5V19" stroke="#e3e3e3" stroke-width="2.2"/><path d="M13 5L5 12L13 19Z M21 5L13 12L21 19Z" fill="#e3e3e3"/></svg>
<svg class="ic" style="left:1462.5px;top:1035.5px;width:17px;height:17px" viewBox="0 0 24 24"><path d="M10 5L2 12L10 19Z" fill="#e3e3e3"/><path d="M14 5V19M19 5V19" stroke="#e3e3e3" stroke-width="2.5"/></svg>
<svg class="ic" style="left:1483.0px;top:1034.0px;width:20px;height:20px" viewBox="0 0 24 24"><path d="M5 3L20 12L5 21Z" fill="#e3e3e3"/></svg>
<svg class="ic" style="left:1507.5px;top:1035.5px;width:17px;height:17px" viewBox="0 0 24 24"><path d="M14 5L22 12L14 19Z" fill="#e3e3e3"/><path d="M5 5V19M10 5V19" stroke="#e3e3e3" stroke-width="2.5"/></svg>
<svg class="ic" style="left:1534.5px;top:1035.5px;width:17px;height:17px" viewBox="0 0 24 24"><path d="M21 5V19" stroke="#e3e3e3" stroke-width="2.2"/><path d="M3 5L11 12L3 19Z M11 5L19 12L11 19Z" fill="#e3e3e3"/></svg>
<div class="a" style="left:1458px;top:1036px;width:2px;height:17px;background:#151515"></div>
<div class="a" style="left:1530px;top:1036px;width:2px;height:17px;background:#151515"></div>
<div class="cor" style="left:1502px;top:1050px;border-bottom-color:#dcdcdc"></div>
<svg class="ic" style="left:1438.0px;top:1059.0px;width:14px;height:14px" viewBox="0 0 24 24"><path d="M10 4L2 12L10 20Z M14 4L22 12L14 20Z" fill="#e3e3e3"/></svg>
<div class="a" style="left:1458px;top:1058px;width:2px;height:17px;background:#151515"></div>
<div class="a" style="left:1461px;top:1058px;width:67px;height:16px;background:#5e5e5e"></div>
<div class="t" style="left:1464px;top:1059.0px;font-size:11.5px;line-height:14px;color:#e8e8e8">0</div>
<svg class="ic" style="left:1517px;top:1061.0px;width:8px;height:10px" viewBox="0 0 8 10"><path d="M1 4L4 1L7 4ZM1 6L4 9L7 6Z" fill="#e8e8e8"/></svg>
<div class="a" style="left:1532px;top:1058px;width:2px;height:17px;background:#151515"></div>
<svg class="ic" style="left:1536.0px;top:1058.0px;width:16px;height:16px" viewBox="0 0 24 24"><circle cx="9" cy="9" r="8" fill="#e3e3e3"/><path d="M9 4V9H13" stroke="#444" stroke-width="1.5" fill="none"/><circle cx="17" cy="17" r="5" fill="#f8c41e"/><circle cx="17" cy="17" r="2" fill="#444"/></svg>
<div class="a" style="left:1566px;top:1034px;width:40px;height:42px;background:#5e5e5e;border-radius:3px"></div>
<svg class="ic" style="left:1571.0px;top:1040.0px;width:30px;height:30px" viewBox="0 0 24 24"><path d="M10 2H14V10H22V14H14V22H10V14H2V10H10Z" fill="#fafafa"/><circle cx="18" cy="17" r="3.5" fill="none" stroke="#46cfd5" stroke-width="2"/><path d="M16 19L9 25M11 23L13 25" stroke="#46cfd5" stroke-width="2"/></svg>
<div class="a" style="left:1611px;top:1034px;width:64px;height:19px;background:#5e5e5e;border-radius:3px"><div style="position:absolute;left:0;right:0;top:1.5px;text-align:center;font-size:12.5px;line-height:16px;color:#eee;white-space:nowrap"><i class="c">自</i><i class="c">动</i><i class="c">关</i><i class="c">键</i><i class="c">点</i></div></div>
<div class="a" style="left:1611px;top:1056px;width:64px;height:19px;background:#5e5e5e;border-radius:3px"><div style="position:absolute;left:0;right:0;top:1.5px;text-align:center;font-size:12.5px;line-height:16px;color:#eee;white-space:nowrap"><i class="c">设</i><i class="c">置</i><i class="c">关</i><i class="c">键</i><i class="c">点</i></div></div>
<div class="a" style="left:1681px;top:1034px;width:111px;height:18px;background:#5e5e5e;border-radius:2px"></div>
<div class="t" style="left:1686px;top:1035px;font-size:12.5px;line-height:16px;color:#eee"><i class="c">选</i><i class="c">定</i><i class="c">对</i><i class="c">象</i></div>
<div class="a" style="left:1777px;top:1041px;width:0;height:0;border-left:4px solid transparent;border-right:4px solid transparent;border-top:5px solid #eee"></div>
<svg class="ic" style="left:1682.0px;top:1057.0px;width:18px;height:18px" viewBox="0 0 24 24"><path d="M6 22Q6 8 4 4M18 22Q18 8 20 4M4 4L9 8M20 4L15 8" stroke="#46cfd5" stroke-width="2" fill="none"/><circle cx="6" cy="4" r="2" fill="#e3e3e3"/><circle cx="18" cy="4" r="2" fill="#e3e3e3"/></svg>
<div class="a" style="left:1707px;top:1056px;width:85px;height:19px;background:#5e5e5e;border-radius:3px"><div style="position:absolute;left:0;right:0;top:1.5px;text-align:center;font-size:12px;line-height:16px;color:#eee;white-space:nowrap"><i class="c">关</i><i class="c">键</i><i class="c">点</i><i class="c">过</i><i class="c">滤</i><i class="c">器</i>..</div></div>
<svg class="ic" style="left:1808.0px;top:1035.0px;width:18px;height:18px" viewBox="0 0 24 24"><circle cx="14" cy="9" r="6.5" fill="none" stroke="#e3e3e3" stroke-width="2.2"/><path d="M9 14L2 21" stroke="#e3e3e3" stroke-width="2.8"/></svg>
<svg class="ic" style="left:1831.0px;top:1035.0px;width:18px;height:18px" viewBox="0 0 24 24"><circle cx="10" cy="13" r="5.5" fill="none" stroke="#e3e3e3" stroke-width="2"/><path d="M6 17L1 22" stroke="#e3e3e3" stroke-width="2.5"/><g fill="#46cfd5"><rect x="13" y="2" width="4" height="4"/><rect x="18" y="2" width="4" height="4"/><rect x="18" y="7" width="4" height="4"/></g></svg>
<svg class="ic" style="left:1854.0px;top:1035.0px;width:18px;height:18px" viewBox="0 0 24 24"><path d="M2 6V2H6M18 2H22V6M22 18V22H18M6 22H2V18" stroke="#e3e3e3" stroke-width="1.8" fill="none"/><path d="M12 5L19 8V16L12 19L5 16V8Z" fill="#46cfd5"/></svg>
<svg class="ic" style="left:1878.0px;top:1035.0px;width:18px;height:18px" viewBox="0 0 24 24"><path d="M14 3L21 6V14L14 17L7 14V6Z" fill="#46cfd5"/><path d="M2 14L6 11L10 14L6 17Z" fill="#e3e3e3"/></svg>
<svg class="ic" style="left:1808.0px;top:1057.0px;width:18px;height:18px" viewBox="0 0 24 24"><path d="M3 4L20 12L3 20" stroke="#e3e3e3" stroke-width="2.2" fill="none"/><path d="M8 7Q11 12 8 17" stroke="#e3e3e3" stroke-width="1.5" fill="none"/></svg>
<svg class="ic" style="left:1831.0px;top:1057.0px;width:18px;height:18px" viewBox="0 0 24 24"><path d="M6 22Q3 16 3 11Q3 9 5 10L7 13V4Q7 2 9 3V10V2Q9 0 11 1V10V2Q11 1 13 2V10V4Q14 2 16 4V15Q16 20 13 22Z" fill="#e3e3e3"/></svg>
<svg class="ic" style="left:1854.0px;top:1057.0px;width:18px;height:18px" viewBox="0 0 24 24"><circle cx="12" cy="12" r="6" fill="#46cfd5"/><path d="M2 16Q12 0 22 8Q12 24 2 16Z" fill="none" stroke="#e3e3e3" stroke-width="2"/></svg>
<svg class="ic" style="left:1878.0px;top:1057.0px;width:18px;height:18px" viewBox="0 0 24 24"><rect x="3" y="3" width="18" height="18" fill="none" stroke="#e3e3e3" stroke-width="2"/><path d="M8 16L17 7M11 7H17V13" stroke="#e3e3e3" stroke-width="2.2" fill="none"/></svg>
<div class="cor" style="left:1873px;top:1052px;border-bottom-color:#dcdcdc"></div>
<div class="cor" style="left:1896px;top:1052px;border-bottom-color:#dcdcdc"></div>
<div class="cor" style="left:1826px;top:1074px;border-bottom-color:#dcdcdc"></div>
<div class="cor" style="left:1849px;top:1074px;border-bottom-color:#dcdcdc"></div>
<div class="cor" style="left:1873px;top:1074px;border-bottom-color:#dcdcdc"></div>
<div class="a" style="left:1910px;top:1070px;width:10px;height:10px;background-image:radial-gradient(#888 0.7px,transparent 0.9px);background-size:3px 3px"></div>
</body></html>
